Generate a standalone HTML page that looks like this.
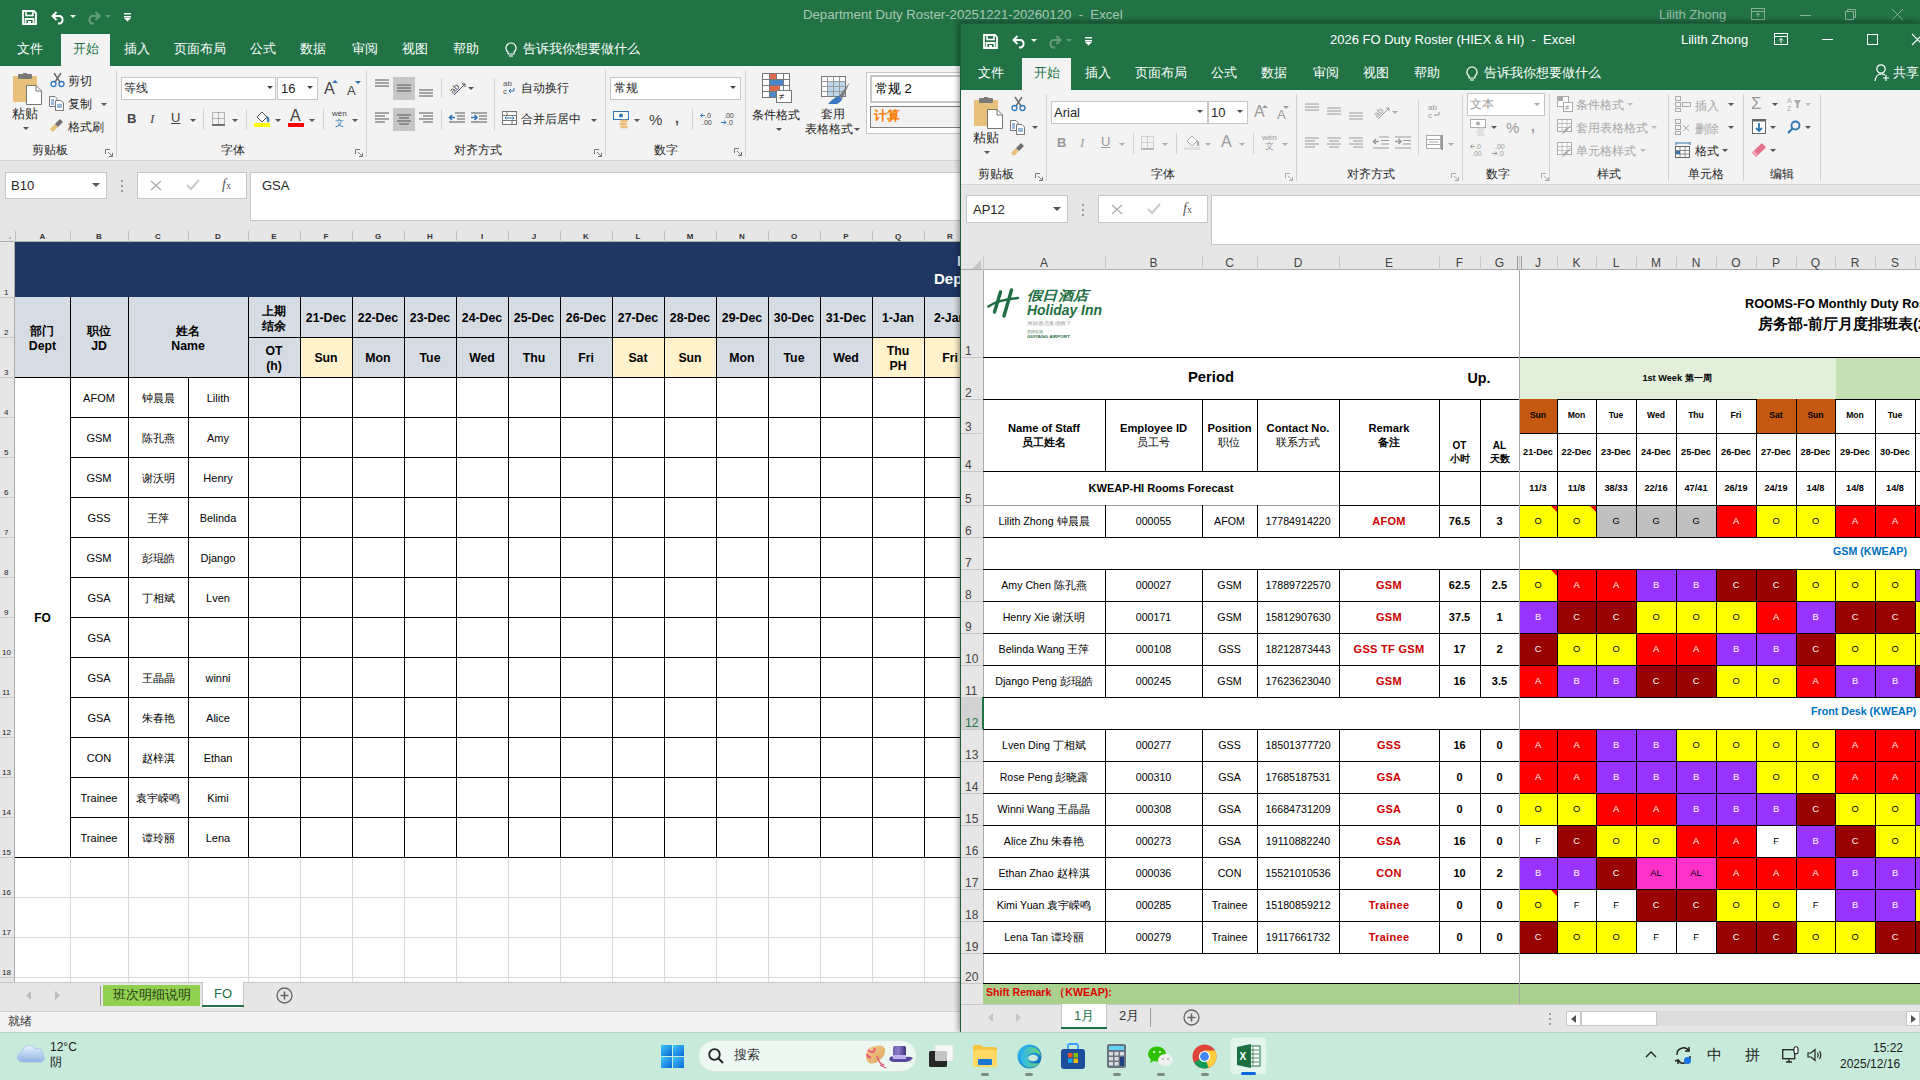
<!DOCTYPE html><html><head><meta charset="utf-8"><style>
*{box-sizing:border-box}
html,body{margin:0;padding:0}
body{width:1920px;height:1080px;overflow:hidden;position:relative;font-family:"Liberation Sans",sans-serif;background:#217346;color:#000}
.a{position:absolute}
.t{position:absolute;white-space:nowrap;line-height:1}
.c{position:absolute;display:flex;align-items:center;justify-content:center;text-align:center;white-space:nowrap;line-height:1.15;overflow:visible}
svg{position:absolute;overflow:visible}
</style></head><body><div class="a" style="left:0;top:0;width:1920px;height:34px;background:#217346"></div><svg style="left:22px;top:10px;" width="15" height="15" viewBox="0 0 15 15"><path d="M1 1 H12 L14 3 V14 H1 Z" fill="none" stroke="#fff" stroke-width="1.8"/><rect x="4" y="1" width="7" height="4.5" fill="none" stroke="#fff" stroke-width="1.6"/><path d="M3.5 14 V9 H11.5 V14" fill="none" stroke="#fff" stroke-width="1.8"/><rect x="6" y="11" width="3" height="3" fill="#fff"/></svg><svg style="left:51px;top:10px;" width="15" height="14" viewBox="0 0 15 14"><path d="M2.5 6 H9 A4 4 0 0 1 9 13.5 H7" fill="none" stroke="#fff" stroke-width="1.9"/><path d="M5.5 2 L1.5 6 L5.5 10" fill="none" stroke="#fff" stroke-width="1.9"/></svg><svg style="left:70px;top:15px;" width="6" height="4" viewBox="0 0 6 4"><path d="M0 0 L6 0 L3 3 Z" fill="#fff"/></svg><svg style="left:86px;top:10px;" width="15" height="14" viewBox="0 0 15 14"><g opacity="0.3"><path d="M12.5 6 H6 A4 4 0 0 0 6 13.5 H8" fill="none" stroke="#fff" stroke-width="1.9"/><path d="M9.5 2 L13.5 6 L9.5 10" fill="none" stroke="#fff" stroke-width="1.9"/></g></svg><svg style="left:105px;top:15px;" width="6" height="4" viewBox="0 0 6 4"><path d="M0 0 L6 0 L3 3 Z" fill="rgba(255,255,255,.3)"/></svg><svg style="left:124px;top:13px;" width="7" height="9" viewBox="0 0 7 9"><rect x="0" y="0" width="7" height="1.5" fill="#fff"/><rect x="0" y="3" width="7" height="1.5" fill="#fff"/><path d="M0 5 L7 5 L3.5 8.5 Z" fill="#fff"/></svg><div class="t" style="left:803px;top:8px;font-size:13.2px;color:rgba(255,255,255,.62)">Department Duty Roster-20251221-20260120&nbsp;&nbsp;-&nbsp;&nbsp;Excel</div><div class="t" style="left:1659px;top:8px;font-size:13px;color:rgba(255,255,255,.55)">Lilith Zhong</div><svg style="left:1751px;top:8px;" width="14" height="12" viewBox="0 0 14 12"><g opacity=".45"><rect x="0.5" y="0.5" width="13" height="11" fill="none" stroke="#fff"/><path d="M0.5 3.5 H13.5 M7 9 V5 M5 7 L7 5 L9 7" stroke="#fff" fill="none"/></g></svg><div class="a" style="left:1800px;top:15px;width:11px;height:1px;background:rgba(255,255,255,.45)"></div><svg style="left:1845px;top:9px;" width="11" height="11" viewBox="0 0 11 11"><g opacity=".45"><rect x="0.5" y="2.5" width="8" height="8" fill="none" stroke="#fff"/><path d="M2.5 2.5 V0.5 H10.5 V8.5 H8.5" stroke="#fff" fill="none"/></g></svg><svg style="left:1892px;top:9px;" width="11" height="11" viewBox="0 0 11 11"><g opacity=".45"><path d="M0 0 L11 11 M11 0 L0 11" stroke="#fff"/></g></svg><div class="a" style="left:0;top:34px;width:1920px;height:32px;background:#217346"></div><div class="a" style="left:61px;top:34px;width:49px;height:32px;background:#f3f3f3"></div><div class="t" style="left:17px;top:42px;font-size:13px;color:#fff">文件</div><div class="t" style="left:73px;top:42px;font-size:13px;color:#217346">开始</div><div class="t" style="left:124px;top:42px;font-size:13px;color:#fff">插入</div><div class="t" style="left:174px;top:42px;font-size:13px;color:#fff">页面布局</div><div class="t" style="left:250px;top:42px;font-size:13px;color:#fff">公式</div><div class="t" style="left:300px;top:42px;font-size:13px;color:#fff">数据</div><div class="t" style="left:352px;top:42px;font-size:13px;color:#fff">审阅</div><div class="t" style="left:402px;top:42px;font-size:13px;color:#fff">视图</div><div class="t" style="left:453px;top:42px;font-size:13px;color:#fff">帮助</div><svg style="left:505px;top:42px;" width="12" height="16" viewBox="0 0 12 16"><path d="M6 1 A5 5 0 0 1 9 10 V12 H3 V10 A5 5 0 0 1 6 1 Z" fill="none" stroke="#fff" stroke-width="1.2"/><path d="M4 14 H8" stroke="#fff" stroke-width="1.2"/></svg><div class="t" style="left:523px;top:42px;font-size:13px;color:#fff">告诉我你想要做什么</div><div class="a" style="left:0px;top:66px;width:1920px;height:95px;background:#f3f3f3;border-bottom:1px solid #d5d5d5"></div><svg style="left:13px;top:73px;" width="30" height="32" viewBox="0 0 30 32"><rect x="0" y="3" width="24" height="26" rx="1" fill="#e8c07a"/><rect x="5" y="1" width="14" height="5" rx="1" fill="#7a7a7a"/><rect x="10" y="0" width="4" height="3" fill="#7a7a7a"/><path d="M13.5 12.5 H23 L28.5 18 V31.5 H13.5 Z" fill="#fff" stroke="#777"/><path d="M23 12.5 V18 H28.5" fill="none" stroke="#777"/></svg><div class="t" style="left:12px;top:107px;font-size:13px;color:#262626">粘贴</div><svg style="left:23px;top:127px;" width="6" height="4" viewBox="0 0 6 4"><path d="M0 0 L6 0 L3 3 Z" fill="#555"/></svg><svg style="left:50px;top:72px;" width="15" height="15" viewBox="0 0 15 15"><path d="M4 1 L10 10 M11 1 L5 10" stroke="#666" stroke-width="1.4"/><circle cx="3.5" cy="12" r="2.5" fill="none" stroke="#2e75b6" stroke-width="1.3"/><circle cx="11.5" cy="12" r="2.5" fill="none" stroke="#2e75b6" stroke-width="1.3"/></svg><div class="t" style="left:68px;top:75px;font-size:12px;color:#262626">剪切</div><svg style="left:49px;top:96px;" width="16" height="15" viewBox="0 0 16 15"><path d="M0.5 0.5 H6 L8 2.5 V10.5 H0.5 Z" fill="#fff" stroke="#777"/><path d="M6.5 4.5 H12 L14.5 7 V14.5 H6.5 Z" fill="#fff" stroke="#777"/><path d="M2 4 H5 M2 6 H5 M2 8 H5" stroke="#2e75b6"/><path d="M8 9 H13 M8 11 H13" stroke="#2e75b6"/></svg><div class="t" style="left:68px;top:98px;font-size:12px;color:#262626">复制</div><svg style="left:101px;top:103px;" width="6" height="4" viewBox="0 0 6 4"><path d="M0 0 L6 0 L3 3 Z" fill="#555"/></svg><svg style="left:49px;top:119px;" width="17" height="14" viewBox="0 0 17 14"><path d="M1 10 L6 5 L9 8 L4 13 Z" fill="#e8c07a"/><path d="M6 5 L11 0 L14 3 L9 8 Z" fill="#707070"/></svg><div class="t" style="left:68px;top:121px;font-size:12px;color:#262626">格式刷</div><div class="c" style="left:28px;top:144px;width:44px;height:14px;font-size:12px;color:#262626"><span>剪贴板</span></div><svg style="left:105px;top:149px;" width="8" height="8" viewBox="0 0 8 8"><path d="M0.5 0.5 H5 M0.5 0.5 V5" stroke="#777" fill="none"/><path d="M3 3 L7.5 7.5 M7.5 4 V7.5 H4" stroke="#777" fill="none"/></svg><div class="a" style="left:116px;top:70px;width:1px;height:87px;background:#d2d2d2"></div><div class="a" style="left:121px;top:77px;width:155px;height:23px;background:#fff;border:1px solid #c6c6c6"></div><div class="t" style="left:124px;top:82px;font-size:12px;color:#262626">等线</div><svg style="left:267px;top:86px;" width="6" height="4" viewBox="0 0 6 4"><path d="M0 0 L6 0 L3 3 Z" fill="#444"/></svg><div class="a" style="left:277px;top:77px;width:41px;height:23px;background:#fff;border:1px solid #c6c6c6"></div><div class="t" style="left:281px;top:82px;font-size:13px;color:#262626">16</div><svg style="left:307px;top:86px;" width="6" height="4" viewBox="0 0 6 4"><path d="M0 0 L6 0 L3 3 Z" fill="#444"/></svg><div class="t" style="left:324px;top:81px;font-size:16px;color:#444">A</div><svg style="left:332px;top:80px;" width="6" height="4" viewBox="0 0 6 4"><path d="M0 3 L3 0 L6 3 Z" fill="#2e75b6"/></svg><div class="t" style="left:347px;top:84px;font-size:13px;color:#444">A</div><svg style="left:355px;top:81px;" width="6" height="4" viewBox="0 0 6 4"><path d="M0 0 L6 0 L3 3 Z" fill="#2e75b6"/></svg><div class="a" style="left:366px;top:70px;width:1px;height:87px;background:#d2d2d2"></div><div class="t" style="left:127px;top:112px;font-size:13px;font-weight:bold;color:#444">B</div><div class="t" style="left:150px;top:112px;font-size:13px;font-style:italic;font-family:'Liberation Serif';color:#444">I</div><div class="t" style="left:171px;top:111px;font-size:13px;color:#444;text-decoration:underline">U</div><svg style="left:190px;top:119px;" width="6" height="4" viewBox="0 0 6 4"><path d="M0 0 L6 0 L3 3 Z" fill="#555"/></svg><div class="a" style="left:203px;top:109px;width:1px;height:21px;background:#d2d2d2"></div><svg style="left:212px;top:112px;" width="14" height="14" viewBox="0 0 14 14"><g stroke="#777" stroke-dasharray="1 1"><rect x="0.5" y="0.5" width="12" height="12" fill="none"/><path d="M6.5 0.5 V12.5 M0.5 6.5 H12.5"/></g><path d="M0 13 H13" stroke="#555" stroke-width="1.5"/></svg><svg style="left:232px;top:119px;" width="6" height="4" viewBox="0 0 6 4"><path d="M0 0 L6 0 L3 3 Z" fill="#555"/></svg><div class="a" style="left:246px;top:109px;width:1px;height:21px;background:#d2d2d2"></div><svg style="left:254px;top:110px;" width="17" height="17" viewBox="0 0 17 17"><path d="M3 7 L8 2 L13 7 L8 12 Z" fill="#fff" stroke="#555"/><path d="M13 7 Q15 9 14 12" stroke="#2e75b6" stroke-width="2" fill="none"/><rect x="0" y="13" width="16" height="4" fill="#ffff00"/></svg><svg style="left:275px;top:119px;" width="6" height="4" viewBox="0 0 6 4"><path d="M0 0 L6 0 L3 3 Z" fill="#555"/></svg><div class="t" style="left:290px;top:108px;font-size:16px;color:#444">A</div><div class="a" style="left:288px;top:123px;width:16px;height:4px;background:#ff0000"></div><svg style="left:309px;top:119px;" width="6" height="4" viewBox="0 0 6 4"><path d="M0 0 L6 0 L3 3 Z" fill="#555"/></svg><div class="a" style="left:323px;top:109px;width:1px;height:21px;background:#d2d2d2"></div><div class="t" style="left:332px;top:110px;font-size:8px;color:#444">wén</div><div class="t" style="left:335px;top:119px;font-size:9px;color:#2e75b6">文</div><svg style="left:352px;top:119px;" width="6" height="4" viewBox="0 0 6 4"><path d="M0 0 L6 0 L3 3 Z" fill="#555"/></svg><div class="c" style="left:206px;top:144px;width:54px;height:14px;font-size:12px;color:#262626"><span>字体</span></div><svg style="left:355px;top:149px;" width="8" height="8" viewBox="0 0 8 8"><path d="M0.5 0.5 H5 M0.5 0.5 V5" stroke="#777" fill="none"/><path d="M3 3 L7.5 7.5 M7.5 4 V7.5 H4" stroke="#777" fill="none"/></svg><svg style="left:375px;top:79px;" width="14" height="11" viewBox="0 0 14 11"><path d="M0 1 H14 M0 4 H14 M0 7 H14" stroke="#555" stroke-width="1"/></svg><div class="a" style="left:393px;top:77px;width:22px;height:23px;background:#c5c5c5"></div><svg style="left:397px;top:84px;" width="14" height="11" viewBox="0 0 14 11"><path d="M0 1 H14 M0 4 H14 M0 7 H14" stroke="#555" stroke-width="1"/></svg><svg style="left:419px;top:89px;" width="14" height="11" viewBox="0 0 14 11"><path d="M0 1 H14 M0 4 H14 M0 7 H14" stroke="#555" stroke-width="1"/></svg><div class="a" style="left:441px;top:78px;width:1px;height:20px;background:#d2d2d2"></div><svg style="left:449px;top:80px;" width="18" height="16" viewBox="0 0 18 16"><text x="0" y="11" font-size="9" fill="#555" transform="rotate(-45 6 8)" font-family="Liberation Sans">ab</text><path d="M5 15 L16 4 M13 4 H16 V7" stroke="#555" fill="none"/></svg><svg style="left:468px;top:87px;" width="6" height="4" viewBox="0 0 6 4"><path d="M0 0 L6 0 L3 3 Z" fill="#555"/></svg><svg style="left:375px;top:112px;" width="14" height="11" viewBox="0 0 14 11"><path d="M0 1 H14 M0 4 H10 M0 7 H14 M0 10 H10" stroke="#555" stroke-width="1"/></svg><div class="a" style="left:393px;top:108px;width:22px;height:23px;background:#c5c5c5"></div><svg style="left:397px;top:114px;" width="14" height="11" viewBox="0 0 14 11"><path d="M0 1 H14 M2 4 H12 M0 7 H14 M2 10 H12" stroke="#555" stroke-width="1"/></svg><svg style="left:419px;top:112px;" width="14" height="11" viewBox="0 0 14 11"><path d="M0 1 H14 M4 4 H14 M0 7 H14 M4 10 H14" stroke="#555" stroke-width="1"/></svg><div class="a" style="left:441px;top:109px;width:1px;height:21px;background:#d2d2d2"></div><svg style="left:449px;top:112px;" width="17" height="12" viewBox="0 0 17 12"><path d="M6 1 H16 M8 4 H16 M8 7 H16 M0 10 H16" stroke="#555"/><path d="M0 5.5 H6 M3 3 L0.5 5.5 L3 8" stroke="#2e75b6" stroke-width="1.6" fill="none"/></svg><svg style="left:471px;top:112px;" width="17" height="12" viewBox="0 0 17 12"><path d="M0 1 H16 M8 4 H16 M8 7 H16 M0 10 H16" stroke="#555"/><path d="M0 5.5 H6 M3.5 3 L6 5.5 L3.5 8" stroke="#2e75b6" stroke-width="1.6" fill="none"/></svg><div class="a" style="left:494px;top:78px;width:1px;height:53px;background:#d2d2d2"></div><svg style="left:503px;top:79px;" width="13" height="16" viewBox="0 0 13 16"><text x="0" y="7" font-size="8" fill="#555" font-family="Liberation Sans">ab</text><text x="0" y="15" font-size="8" fill="#555" font-family="Liberation Sans">c</text><path d="M6 12 H11 V9 M6 12 L8 10 M6 12 L8 14" stroke="#2e75b6" fill="none"/></svg><div class="t" style="left:521px;top:82px;font-size:12px;color:#262626">自动换行</div><svg style="left:502px;top:111px;" width="15" height="14" viewBox="0 0 15 14"><rect x="0.5" y="0.5" width="14" height="13" fill="#fff" stroke="#777"/><path d="M0.5 4.5 H14.5 M0.5 9.5 H14.5 M5 0.5 V4.5 M10 9.5 V13.5" stroke="#777"/><path d="M3 7 H12 M4.5 5.5 L3 7 L4.5 8.5 M10.5 5.5 L12 7 L10.5 8.5" stroke="#2e75b6" fill="none"/></svg><div class="t" style="left:521px;top:113px;font-size:12px;color:#262626">合并后居中</div><svg style="left:591px;top:119px;" width="6" height="4" viewBox="0 0 6 4"><path d="M0 0 L6 0 L3 3 Z" fill="#555"/></svg><div class="c" style="left:450px;top:144px;width:56px;height:14px;font-size:12px;color:#262626"><span>对齐方式</span></div><svg style="left:594px;top:149px;" width="8" height="8" viewBox="0 0 8 8"><path d="M0.5 0.5 H5 M0.5 0.5 V5" stroke="#777" fill="none"/><path d="M3 3 L7.5 7.5 M7.5 4 V7.5 H4" stroke="#777" fill="none"/></svg><div class="a" style="left:605px;top:70px;width:1px;height:87px;background:#d2d2d2"></div><div class="a" style="left:610px;top:77px;width:131px;height:23px;background:#fff;border:1px solid #c6c6c6"></div><div class="t" style="left:614px;top:82px;font-size:12px;color:#262626">常规</div><svg style="left:730px;top:86px;" width="6" height="4" viewBox="0 0 6 4"><path d="M0 0 L6 0 L3 3 Z" fill="#444"/></svg><svg style="left:613px;top:111px;" width="17" height="17" viewBox="0 0 17 17"><rect x="0.5" y="0.5" width="15" height="8" fill="#fff" stroke="#2e75b6"/><circle cx="8" cy="4.5" r="2" fill="#2e75b6"/><ellipse cx="11" cy="10" rx="4" ry="1.6" fill="#e8c07a"/><ellipse cx="10" cy="13" rx="4" ry="1.6" fill="#e8c07a"/><ellipse cx="11" cy="16" rx="4" ry="1.4" fill="#e8c07a"/></svg><svg style="left:634px;top:119px;" width="6" height="4" viewBox="0 0 6 4"><path d="M0 0 L6 0 L3 3 Z" fill="#555"/></svg><div class="t" style="left:649px;top:112px;font-size:15px;color:#444">%</div><div class="t" style="left:675px;top:111px;font-size:14px;font-weight:bold;color:#444">,</div><div class="a" style="left:692px;top:109px;width:1px;height:21px;background:#d2d2d2"></div><svg style="left:700px;top:112px;" width="14" height="14" viewBox="0 0 14 14"><text x="5" y="6" font-size="7" fill="#444" font-family="Liberation Sans">.0</text><text x="2" y="13" font-size="7" fill="#444" font-family="Liberation Sans">.00</text><path d="M0.5 3.5 H5 M2.5 1.5 L0.5 3.5 L2.5 5.5" stroke="#2e75b6" fill="none"/></svg><svg style="left:721px;top:112px;" width="14" height="14" viewBox="0 0 14 14"><text x="3" y="6" font-size="7" fill="#444" font-family="Liberation Sans">.00</text><text x="6" y="13" font-size="7" fill="#444" font-family="Liberation Sans">.0</text><path d="M0 10.5 H5 M3 8.5 L5 10.5 L3 12.5" stroke="#2e75b6" fill="none"/></svg><div class="c" style="left:640px;top:144px;width:52px;height:14px;font-size:12px;color:#262626"><span>数字</span></div><svg style="left:734px;top:148px;" width="8" height="8" viewBox="0 0 8 8"><path d="M0.5 0.5 H5 M0.5 0.5 V5" stroke="#777" fill="none"/><path d="M3 3 L7.5 7.5 M7.5 4 V7.5 H4" stroke="#777" fill="none"/></svg><div class="a" style="left:745px;top:70px;width:1px;height:87px;background:#d2d2d2"></div><svg style="left:762px;top:73px;" width="30" height="30" viewBox="0 0 30 30"><g stroke="#777" fill="#fff"><rect x="0.5" y="0.5" width="27" height="24"/></g><path d="M0.5 6.5 H27.5 M0.5 12.5 H27.5 M0.5 18.5 H27.5 M7.5 0.5 V24.5 M14.5 0.5 V24.5 M21.5 0.5 V24.5" stroke="#777"/><rect x="8" y="1" width="6" height="5" fill="#e0684b"/><rect x="8" y="7" width="13" height="5" fill="#4a86c8"/><rect x="8" y="13" width="10" height="5" fill="#e0684b"/><rect x="8" y="19" width="6" height="5" fill="#4a86c8"/><rect x="14.5" y="17.5" width="15" height="12" fill="#fff" stroke="#777"/><text x="17" y="27" font-size="10" fill="#333" font-family="Liberation Sans">≠</text></svg><div class="t" style="left:752px;top:109px;font-size:12px;color:#262626">条件格式</div><svg style="left:776px;top:128px;" width="6" height="4" viewBox="0 0 6 4"><path d="M0 0 L6 0 L3 3 Z" fill="#555"/></svg><svg style="left:821px;top:76px;" width="30" height="28" viewBox="0 0 30 28"><rect x="0.5" y="0.5" width="24" height="20" fill="#fff" stroke="#777"/><rect x="6" y="6" width="18" height="14" fill="#bdd7ee"/><path d="M0.5 5.5 H24.5 M0.5 10.5 H24.5 M0.5 15.5 H24.5 M6.5 0.5 V20.5 M12.5 0.5 V20.5 M18.5 0.5 V20.5" stroke="#999"/><path d="M29 6 L18 20 L21 23 Z" fill="#7a7a7a"/><path d="M18 20 Q12 22 7 28 H16 Q21 25 21 23 Z" fill="#3a78c3"/></svg><div class="t" style="left:821px;top:108px;font-size:12px;color:#262626">套用</div><div class="t" style="left:805px;top:123px;font-size:12px;color:#262626">表格格式</div><svg style="left:854px;top:128px;" width="6" height="4" viewBox="0 0 6 4"><path d="M0 0 L6 0 L3 3 Z" fill="#555"/></svg><div class="a" style="left:866px;top:72px;width:100px;height:62px;background:#fff;border:1px solid #c6c6c6"></div><div class="a" style="left:870px;top:75px;width:96px;height:28px;background:#fff;border:2px solid #c6c6c6"></div><div class="t" style="left:875px;top:82px;font-size:13px;color:#000">常规 2</div><div class="a" style="left:870px;top:106px;width:96px;height:22px;background:#f2f2f2;border:1px solid #7f7f7f"></div><div class="t" style="left:874px;top:109px;font-size:13px;font-weight:bold;color:#fa7d00">计算</div><div class="a" style="left:0px;top:161px;width:960px;height:70px;background:#e6e6e6"></div><div class="a" style="left:5px;top:172px;width:102px;height:27px;background:#fff;border:1px solid #c6c6c6"></div><div class="t" style="left:11px;top:179px;font-size:13px;color:#262626">B10</div><svg style="left:92px;top:183px;" width="8" height="5" viewBox="0 0 8 5"><path d="M0 0 L8 0 L4 4 Z" fill="#555"/></svg><div class="a" style="left:121px;top:180px;width:2px;height:2px;background:#9a9a9a"></div><div class="a" style="left:121px;top:185px;width:2px;height:2px;background:#9a9a9a"></div><div class="a" style="left:121px;top:190px;width:2px;height:2px;background:#9a9a9a"></div><div class="a" style="left:137px;top:172px;width:110px;height:27px;background:#fff;border:1px solid #c6c6c6"></div><svg style="left:150px;top:180px;" width="12" height="11" viewBox="0 0 12 11"><path d="M1 1 L11 10 M11 1 L1 10" stroke="#b0b0b0" stroke-width="1.4"/></svg><svg style="left:186px;top:179px;" width="14" height="12" viewBox="0 0 14 12"><path d="M1 6 L5 10 L13 1" stroke="#c8c8c8" stroke-width="2" fill="none"/></svg><div class="t" style="left:222px;top:178px;font-size:14px;font-family:'Liberation Serif';color:#555"><i>f</i><span style='font-size:10px'>x</span></div><div class="a" style="left:250px;top:172px;width:710px;height:49px;background:#fff;border:1px solid #c6c6c6;border-right:none"></div><div class="t" style="left:262px;top:179px;font-size:13px;color:#262626">GSA</div><div class="a" style="left:0px;top:231px;width:960px;height:11px;background:#e6e6e6;border-bottom:1px solid #ababab"></div><svg style="left:8px;top:236px;" width="3" height="3" viewBox="0 0 3 3"><path d="M3 0 V3 H0 Z" fill="#b4b4b4"/></svg><div class="a" style="left:15px;top:231px;width:1px;height:11px;background:#c0c0c0"></div><div class="c" style="left:15px;top:232px;width:55px;height:10px;font-size:8px;font-weight:bold;color:#333;line-height:1"><span>A</span></div><div class="a" style="left:70px;top:231px;width:1px;height:11px;background:#c0c0c0"></div><div class="c" style="left:70px;top:232px;width:58px;height:10px;font-size:8px;font-weight:bold;color:#333;line-height:1"><span>B</span></div><div class="a" style="left:128px;top:231px;width:1px;height:11px;background:#c0c0c0"></div><div class="c" style="left:128px;top:232px;width:60px;height:10px;font-size:8px;font-weight:bold;color:#333;line-height:1"><span>C</span></div><div class="a" style="left:188px;top:231px;width:1px;height:11px;background:#c0c0c0"></div><div class="c" style="left:188px;top:232px;width:60px;height:10px;font-size:8px;font-weight:bold;color:#333;line-height:1"><span>D</span></div><div class="a" style="left:248px;top:231px;width:1px;height:11px;background:#c0c0c0"></div><div class="c" style="left:248px;top:232px;width:52px;height:10px;font-size:8px;font-weight:bold;color:#333;line-height:1"><span>E</span></div><div class="a" style="left:300px;top:231px;width:1px;height:11px;background:#c0c0c0"></div><div class="c" style="left:300px;top:232px;width:52px;height:10px;font-size:8px;font-weight:bold;color:#333;line-height:1"><span>F</span></div><div class="a" style="left:352px;top:231px;width:1px;height:11px;background:#c0c0c0"></div><div class="c" style="left:352px;top:232px;width:52px;height:10px;font-size:8px;font-weight:bold;color:#333;line-height:1"><span>G</span></div><div class="a" style="left:404px;top:231px;width:1px;height:11px;background:#c0c0c0"></div><div class="c" style="left:404px;top:232px;width:52px;height:10px;font-size:8px;font-weight:bold;color:#333;line-height:1"><span>H</span></div><div class="a" style="left:456px;top:231px;width:1px;height:11px;background:#c0c0c0"></div><div class="c" style="left:456px;top:232px;width:52px;height:10px;font-size:8px;font-weight:bold;color:#333;line-height:1"><span>I</span></div><div class="a" style="left:508px;top:231px;width:1px;height:11px;background:#c0c0c0"></div><div class="c" style="left:508px;top:232px;width:52px;height:10px;font-size:8px;font-weight:bold;color:#333;line-height:1"><span>J</span></div><div class="a" style="left:560px;top:231px;width:1px;height:11px;background:#c0c0c0"></div><div class="c" style="left:560px;top:232px;width:52px;height:10px;font-size:8px;font-weight:bold;color:#333;line-height:1"><span>K</span></div><div class="a" style="left:612px;top:231px;width:1px;height:11px;background:#c0c0c0"></div><div class="c" style="left:612px;top:232px;width:52px;height:10px;font-size:8px;font-weight:bold;color:#333;line-height:1"><span>L</span></div><div class="a" style="left:664px;top:231px;width:1px;height:11px;background:#c0c0c0"></div><div class="c" style="left:664px;top:232px;width:52px;height:10px;font-size:8px;font-weight:bold;color:#333;line-height:1"><span>M</span></div><div class="a" style="left:716px;top:231px;width:1px;height:11px;background:#c0c0c0"></div><div class="c" style="left:716px;top:232px;width:52px;height:10px;font-size:8px;font-weight:bold;color:#333;line-height:1"><span>N</span></div><div class="a" style="left:768px;top:231px;width:1px;height:11px;background:#c0c0c0"></div><div class="c" style="left:768px;top:232px;width:52px;height:10px;font-size:8px;font-weight:bold;color:#333;line-height:1"><span>O</span></div><div class="a" style="left:820px;top:231px;width:1px;height:11px;background:#c0c0c0"></div><div class="c" style="left:820px;top:232px;width:52px;height:10px;font-size:8px;font-weight:bold;color:#333;line-height:1"><span>P</span></div><div class="a" style="left:872px;top:231px;width:1px;height:11px;background:#c0c0c0"></div><div class="c" style="left:872px;top:232px;width:52px;height:10px;font-size:8px;font-weight:bold;color:#333;line-height:1"><span>Q</span></div><div class="a" style="left:924px;top:231px;width:1px;height:11px;background:#c0c0c0"></div><div class="c" style="left:924px;top:232px;width:52px;height:10px;font-size:8px;font-weight:bold;color:#333;line-height:1"><span>R</span></div><div class="a" style="left:15px;top:242px;width:945px;height:740px;background:#fff"></div><div class="a" style="left:0px;top:242px;width:15px;height:740px;background:#e6e6e6;border-right:1px solid #ababab"></div><div class="a" style="left:0px;top:297px;width:14px;height:1px;background:#c8c8c8"></div><div class="t" style="left:4px;top:289px;font-size:8px;color:#222">1</div><div class="a" style="left:0px;top:337px;width:14px;height:1px;background:#c8c8c8"></div><div class="t" style="left:4px;top:329px;font-size:8px;color:#222">2</div><div class="a" style="left:0px;top:377px;width:14px;height:1px;background:#c8c8c8"></div><div class="t" style="left:4px;top:369px;font-size:8px;color:#222">3</div><div class="a" style="left:0px;top:417px;width:14px;height:1px;background:#c8c8c8"></div><div class="t" style="left:4px;top:409px;font-size:8px;color:#222">4</div><div class="a" style="left:0px;top:457px;width:14px;height:1px;background:#c8c8c8"></div><div class="t" style="left:4px;top:449px;font-size:8px;color:#222">5</div><div class="a" style="left:0px;top:497px;width:14px;height:1px;background:#c8c8c8"></div><div class="t" style="left:4px;top:489px;font-size:8px;color:#222">6</div><div class="a" style="left:0px;top:537px;width:14px;height:1px;background:#c8c8c8"></div><div class="t" style="left:4px;top:529px;font-size:8px;color:#222">7</div><div class="a" style="left:0px;top:577px;width:14px;height:1px;background:#c8c8c8"></div><div class="t" style="left:4px;top:569px;font-size:8px;color:#222">8</div><div class="a" style="left:0px;top:617px;width:14px;height:1px;background:#c8c8c8"></div><div class="t" style="left:4px;top:609px;font-size:8px;color:#222">9</div><div class="a" style="left:0px;top:657px;width:14px;height:1px;background:#c8c8c8"></div><div class="t" style="left:2px;top:649px;font-size:8px;color:#222">10</div><div class="a" style="left:0px;top:697px;width:14px;height:1px;background:#c8c8c8"></div><div class="t" style="left:2px;top:689px;font-size:8px;color:#222">11</div><div class="a" style="left:0px;top:737px;width:14px;height:1px;background:#c8c8c8"></div><div class="t" style="left:2px;top:729px;font-size:8px;color:#222">12</div><div class="a" style="left:0px;top:777px;width:14px;height:1px;background:#c8c8c8"></div><div class="t" style="left:2px;top:769px;font-size:8px;color:#222">13</div><div class="a" style="left:0px;top:817px;width:14px;height:1px;background:#c8c8c8"></div><div class="t" style="left:2px;top:809px;font-size:8px;color:#222">14</div><div class="a" style="left:0px;top:857px;width:14px;height:1px;background:#c8c8c8"></div><div class="t" style="left:2px;top:849px;font-size:8px;color:#222">15</div><div class="a" style="left:0px;top:897px;width:14px;height:1px;background:#c8c8c8"></div><div class="t" style="left:2px;top:889px;font-size:8px;color:#222">16</div><div class="a" style="left:0px;top:937px;width:14px;height:1px;background:#c8c8c8"></div><div class="t" style="left:2px;top:929px;font-size:8px;color:#222">17</div><div class="a" style="left:0px;top:977px;width:14px;height:1px;background:#c8c8c8"></div><div class="t" style="left:2px;top:969px;font-size:8px;color:#222">18</div><div class="a" style="left:70px;top:857px;width:1px;height:125px;background:#d9d9d9"></div><div class="a" style="left:128px;top:857px;width:1px;height:125px;background:#d9d9d9"></div><div class="a" style="left:188px;top:857px;width:1px;height:125px;background:#d9d9d9"></div><div class="a" style="left:248px;top:857px;width:1px;height:125px;background:#d9d9d9"></div><div class="a" style="left:300px;top:857px;width:1px;height:125px;background:#d9d9d9"></div><div class="a" style="left:352px;top:857px;width:1px;height:125px;background:#d9d9d9"></div><div class="a" style="left:404px;top:857px;width:1px;height:125px;background:#d9d9d9"></div><div class="a" style="left:456px;top:857px;width:1px;height:125px;background:#d9d9d9"></div><div class="a" style="left:508px;top:857px;width:1px;height:125px;background:#d9d9d9"></div><div class="a" style="left:560px;top:857px;width:1px;height:125px;background:#d9d9d9"></div><div class="a" style="left:612px;top:857px;width:1px;height:125px;background:#d9d9d9"></div><div class="a" style="left:664px;top:857px;width:1px;height:125px;background:#d9d9d9"></div><div class="a" style="left:716px;top:857px;width:1px;height:125px;background:#d9d9d9"></div><div class="a" style="left:768px;top:857px;width:1px;height:125px;background:#d9d9d9"></div><div class="a" style="left:820px;top:857px;width:1px;height:125px;background:#d9d9d9"></div><div class="a" style="left:872px;top:857px;width:1px;height:125px;background:#d9d9d9"></div><div class="a" style="left:924px;top:857px;width:1px;height:125px;background:#d9d9d9"></div><div class="a" style="left:15px;top:897px;width:945px;height:1px;background:#d9d9d9"></div><div class="a" style="left:15px;top:937px;width:945px;height:1px;background:#d9d9d9"></div><div class="a" style="left:15px;top:977px;width:945px;height:1px;background:#d9d9d9"></div><div class="a" style="left:15px;top:242px;width:945px;height:55px;background:#203764"></div><div class="t" style="left:957px;top:253px;font-size:15px;font-weight:bold;color:#fff">H</div><div class="t" style="left:934px;top:271px;font-size:15px;font-weight:bold;color:#fff">Dep</div><div class="a" style="left:15px;top:297px;width:945px;height:80px;background:#d6dce4"></div><div class="a" style="left:300px;top:337px;width:52px;height:40px;background:#fff2cc"></div><div class="c" style="left:300px;top:297px;width:52px;height:40px;font-size:12.3px;font-weight:bold;color:#000;padding-top:3px"><span>21-Dec</span></div><div class="c" style="left:300px;top:337px;width:52px;height:40px;font-size:12.3px;font-weight:bold;color:#000;padding-top:3px"><span>Sun</span></div><div class="c" style="left:352px;top:297px;width:52px;height:40px;font-size:12.3px;font-weight:bold;color:#000;padding-top:3px"><span>22-Dec</span></div><div class="c" style="left:352px;top:337px;width:52px;height:40px;font-size:12.3px;font-weight:bold;color:#000;padding-top:3px"><span>Mon</span></div><div class="c" style="left:404px;top:297px;width:52px;height:40px;font-size:12.3px;font-weight:bold;color:#000;padding-top:3px"><span>23-Dec</span></div><div class="c" style="left:404px;top:337px;width:52px;height:40px;font-size:12.3px;font-weight:bold;color:#000;padding-top:3px"><span>Tue</span></div><div class="c" style="left:456px;top:297px;width:52px;height:40px;font-size:12.3px;font-weight:bold;color:#000;padding-top:3px"><span>24-Dec</span></div><div class="c" style="left:456px;top:337px;width:52px;height:40px;font-size:12.3px;font-weight:bold;color:#000;padding-top:3px"><span>Wed</span></div><div class="c" style="left:508px;top:297px;width:52px;height:40px;font-size:12.3px;font-weight:bold;color:#000;padding-top:3px"><span>25-Dec</span></div><div class="c" style="left:508px;top:337px;width:52px;height:40px;font-size:12.3px;font-weight:bold;color:#000;padding-top:3px"><span>Thu</span></div><div class="c" style="left:560px;top:297px;width:52px;height:40px;font-size:12.3px;font-weight:bold;color:#000;padding-top:3px"><span>26-Dec</span></div><div class="c" style="left:560px;top:337px;width:52px;height:40px;font-size:12.3px;font-weight:bold;color:#000;padding-top:3px"><span>Fri</span></div><div class="a" style="left:612px;top:337px;width:52px;height:40px;background:#fff2cc"></div><div class="c" style="left:612px;top:297px;width:52px;height:40px;font-size:12.3px;font-weight:bold;color:#000;padding-top:3px"><span>27-Dec</span></div><div class="c" style="left:612px;top:337px;width:52px;height:40px;font-size:12.3px;font-weight:bold;color:#000;padding-top:3px"><span>Sat</span></div><div class="a" style="left:664px;top:337px;width:52px;height:40px;background:#fff2cc"></div><div class="c" style="left:664px;top:297px;width:52px;height:40px;font-size:12.3px;font-weight:bold;color:#000;padding-top:3px"><span>28-Dec</span></div><div class="c" style="left:664px;top:337px;width:52px;height:40px;font-size:12.3px;font-weight:bold;color:#000;padding-top:3px"><span>Sun</span></div><div class="c" style="left:716px;top:297px;width:52px;height:40px;font-size:12.3px;font-weight:bold;color:#000;padding-top:3px"><span>29-Dec</span></div><div class="c" style="left:716px;top:337px;width:52px;height:40px;font-size:12.3px;font-weight:bold;color:#000;padding-top:3px"><span>Mon</span></div><div class="c" style="left:768px;top:297px;width:52px;height:40px;font-size:12.3px;font-weight:bold;color:#000;padding-top:3px"><span>30-Dec</span></div><div class="c" style="left:768px;top:337px;width:52px;height:40px;font-size:12.3px;font-weight:bold;color:#000;padding-top:3px"><span>Tue</span></div><div class="c" style="left:820px;top:297px;width:52px;height:40px;font-size:12.3px;font-weight:bold;color:#000;padding-top:3px"><span>31-Dec</span></div><div class="c" style="left:820px;top:337px;width:52px;height:40px;font-size:12.3px;font-weight:bold;color:#000;padding-top:3px"><span>Wed</span></div><div class="a" style="left:872px;top:337px;width:52px;height:40px;background:#fff2cc"></div><div class="c" style="left:872px;top:297px;width:52px;height:40px;font-size:12.3px;font-weight:bold;color:#000;padding-top:3px"><span>1-Jan</span></div><div class="c" style="left:872px;top:337px;width:52px;height:40px;font-size:12.3px;font-weight:bold;color:#000;padding-top:3px"><span>Thu<br>PH</span></div><div class="a" style="left:924px;top:337px;width:52px;height:40px;background:#fff2cc"></div><div class="c" style="left:924px;top:297px;width:52px;height:40px;font-size:12.3px;font-weight:bold;color:#000;padding-top:3px"><span>2-Jan</span></div><div class="c" style="left:924px;top:337px;width:52px;height:40px;font-size:12.3px;font-weight:bold;color:#000;padding-top:3px"><span>Fri</span></div><div class="c" style="left:15px;top:297px;width:55px;height:80px;font-size:12.3px;font-weight:bold;color:#000;padding-top:3px"><span>部门<br>Dept</span></div><div class="c" style="left:70px;top:297px;width:58px;height:80px;font-size:12.3px;font-weight:bold;color:#000;padding-top:3px"><span>职位<br>JD</span></div><div class="c" style="left:128px;top:297px;width:120px;height:80px;font-size:12.3px;font-weight:bold;color:#000;padding-top:3px"><span>姓名<br>Name</span></div><div class="c" style="left:248px;top:297px;width:52px;height:40px;font-size:12.3px;font-weight:bold;color:#000;padding-top:3px"><span>上期<br>结余</span></div><div class="c" style="left:248px;top:337px;width:52px;height:40px;font-size:12.3px;font-weight:bold;color:#000;padding-top:3px"><span>OT<br>(h)</span></div><div class="a" style="left:70px;top:297px;width:1px;height:80px;background:#000"></div><div class="a" style="left:128px;top:297px;width:1px;height:80px;background:#000"></div><div class="a" style="left:248px;top:297px;width:1px;height:80px;background:#000"></div><div class="a" style="left:300px;top:297px;width:1px;height:80px;background:#000"></div><div class="a" style="left:352px;top:297px;width:1px;height:80px;background:#000"></div><div class="a" style="left:404px;top:297px;width:1px;height:80px;background:#000"></div><div class="a" style="left:456px;top:297px;width:1px;height:80px;background:#000"></div><div class="a" style="left:508px;top:297px;width:1px;height:80px;background:#000"></div><div class="a" style="left:560px;top:297px;width:1px;height:80px;background:#000"></div><div class="a" style="left:612px;top:297px;width:1px;height:80px;background:#000"></div><div class="a" style="left:664px;top:297px;width:1px;height:80px;background:#000"></div><div class="a" style="left:716px;top:297px;width:1px;height:80px;background:#000"></div><div class="a" style="left:768px;top:297px;width:1px;height:80px;background:#000"></div><div class="a" style="left:820px;top:297px;width:1px;height:80px;background:#000"></div><div class="a" style="left:872px;top:297px;width:1px;height:80px;background:#000"></div><div class="a" style="left:924px;top:297px;width:1px;height:80px;background:#000"></div><div class="a" style="left:248px;top:337px;width:712px;height:1px;background:#000"></div><div class="a" style="left:15px;top:377px;width:945px;height:1px;background:#000"></div><div class="c" style="left:70px;top:377px;width:58px;height:40px;font-size:11px;color:#000;padding-top:2px"><span>AFOM</span></div><div class="c" style="left:128px;top:377px;width:60px;height:40px;font-size:11px;color:#000;padding-top:2px"><span>钟晨晨</span></div><div class="c" style="left:188px;top:377px;width:60px;height:40px;font-size:11px;color:#000;padding-top:2px"><span>Lilith</span></div><div class="c" style="left:70px;top:417px;width:58px;height:40px;font-size:11px;color:#000;padding-top:2px"><span>GSM</span></div><div class="c" style="left:128px;top:417px;width:60px;height:40px;font-size:11px;color:#000;padding-top:2px"><span>陈孔燕</span></div><div class="c" style="left:188px;top:417px;width:60px;height:40px;font-size:11px;color:#000;padding-top:2px"><span>Amy</span></div><div class="c" style="left:70px;top:457px;width:58px;height:40px;font-size:11px;color:#000;padding-top:2px"><span>GSM</span></div><div class="c" style="left:128px;top:457px;width:60px;height:40px;font-size:11px;color:#000;padding-top:2px"><span>谢沃明</span></div><div class="c" style="left:188px;top:457px;width:60px;height:40px;font-size:11px;color:#000;padding-top:2px"><span>Henry</span></div><div class="c" style="left:70px;top:497px;width:58px;height:40px;font-size:11px;color:#000;padding-top:2px"><span>GSS</span></div><div class="c" style="left:128px;top:497px;width:60px;height:40px;font-size:11px;color:#000;padding-top:2px"><span>王萍</span></div><div class="c" style="left:188px;top:497px;width:60px;height:40px;font-size:11px;color:#000;padding-top:2px"><span>Belinda</span></div><div class="c" style="left:70px;top:537px;width:58px;height:40px;font-size:11px;color:#000;padding-top:2px"><span>GSM</span></div><div class="c" style="left:128px;top:537px;width:60px;height:40px;font-size:11px;color:#000;padding-top:2px"><span>彭琨皓</span></div><div class="c" style="left:188px;top:537px;width:60px;height:40px;font-size:11px;color:#000;padding-top:2px"><span>Django</span></div><div class="c" style="left:70px;top:577px;width:58px;height:40px;font-size:11px;color:#000;padding-top:2px"><span>GSA</span></div><div class="c" style="left:128px;top:577px;width:60px;height:40px;font-size:11px;color:#000;padding-top:2px"><span>丁相斌</span></div><div class="c" style="left:188px;top:577px;width:60px;height:40px;font-size:11px;color:#000;padding-top:2px"><span>Lven</span></div><div class="c" style="left:70px;top:617px;width:58px;height:40px;font-size:11px;color:#000;padding-top:2px"><span>GSA</span></div><div class="c" style="left:128px;top:617px;width:60px;height:40px;font-size:11px;color:#000;padding-top:2px"><span></span></div><div class="c" style="left:188px;top:617px;width:60px;height:40px;font-size:11px;color:#000;padding-top:2px"><span></span></div><div class="c" style="left:70px;top:657px;width:58px;height:40px;font-size:11px;color:#000;padding-top:2px"><span>GSA</span></div><div class="c" style="left:128px;top:657px;width:60px;height:40px;font-size:11px;color:#000;padding-top:2px"><span>王晶晶</span></div><div class="c" style="left:188px;top:657px;width:60px;height:40px;font-size:11px;color:#000;padding-top:2px"><span>winni</span></div><div class="c" style="left:70px;top:697px;width:58px;height:40px;font-size:11px;color:#000;padding-top:2px"><span>GSA</span></div><div class="c" style="left:128px;top:697px;width:60px;height:40px;font-size:11px;color:#000;padding-top:2px"><span>朱春艳</span></div><div class="c" style="left:188px;top:697px;width:60px;height:40px;font-size:11px;color:#000;padding-top:2px"><span>Alice</span></div><div class="c" style="left:70px;top:737px;width:58px;height:40px;font-size:11px;color:#000;padding-top:2px"><span>CON</span></div><div class="c" style="left:128px;top:737px;width:60px;height:40px;font-size:11px;color:#000;padding-top:2px"><span>赵梓淇</span></div><div class="c" style="left:188px;top:737px;width:60px;height:40px;font-size:11px;color:#000;padding-top:2px"><span>Ethan</span></div><div class="c" style="left:70px;top:777px;width:58px;height:40px;font-size:11px;color:#000;padding-top:2px"><span>Trainee</span></div><div class="c" style="left:128px;top:777px;width:60px;height:40px;font-size:11px;color:#000;padding-top:2px"><span>袁宇嵘鸣</span></div><div class="c" style="left:188px;top:777px;width:60px;height:40px;font-size:11px;color:#000;padding-top:2px"><span>Kimi</span></div><div class="c" style="left:70px;top:817px;width:58px;height:40px;font-size:11px;color:#000;padding-top:2px"><span>Trainee</span></div><div class="c" style="left:128px;top:817px;width:60px;height:40px;font-size:11px;color:#000;padding-top:2px"><span>谭玲丽</span></div><div class="c" style="left:188px;top:817px;width:60px;height:40px;font-size:11px;color:#000;padding-top:2px"><span>Lena</span></div><div class="c" style="left:15px;top:377px;width:55px;height:480px;font-size:12px;font-weight:bold;color:#000;padding-top:3px"><span>FO</span></div><div class="a" style="left:70px;top:377px;width:1px;height:481px;background:#000"></div><div class="a" style="left:128px;top:377px;width:1px;height:481px;background:#000"></div><div class="a" style="left:188px;top:377px;width:1px;height:481px;background:#000"></div><div class="a" style="left:248px;top:377px;width:1px;height:481px;background:#000"></div><div class="a" style="left:300px;top:377px;width:1px;height:481px;background:#000"></div><div class="a" style="left:352px;top:377px;width:1px;height:481px;background:#000"></div><div class="a" style="left:404px;top:377px;width:1px;height:481px;background:#000"></div><div class="a" style="left:456px;top:377px;width:1px;height:481px;background:#000"></div><div class="a" style="left:508px;top:377px;width:1px;height:481px;background:#000"></div><div class="a" style="left:560px;top:377px;width:1px;height:481px;background:#000"></div><div class="a" style="left:612px;top:377px;width:1px;height:481px;background:#000"></div><div class="a" style="left:664px;top:377px;width:1px;height:481px;background:#000"></div><div class="a" style="left:716px;top:377px;width:1px;height:481px;background:#000"></div><div class="a" style="left:768px;top:377px;width:1px;height:481px;background:#000"></div><div class="a" style="left:820px;top:377px;width:1px;height:481px;background:#000"></div><div class="a" style="left:872px;top:377px;width:1px;height:481px;background:#000"></div><div class="a" style="left:924px;top:377px;width:1px;height:481px;background:#000"></div><div class="a" style="left:70px;top:417px;width:890px;height:1px;background:#000"></div><div class="a" style="left:70px;top:457px;width:890px;height:1px;background:#000"></div><div class="a" style="left:70px;top:497px;width:890px;height:1px;background:#000"></div><div class="a" style="left:70px;top:537px;width:890px;height:1px;background:#000"></div><div class="a" style="left:70px;top:577px;width:890px;height:1px;background:#000"></div><div class="a" style="left:70px;top:617px;width:890px;height:1px;background:#000"></div><div class="a" style="left:70px;top:657px;width:890px;height:1px;background:#000"></div><div class="a" style="left:70px;top:697px;width:890px;height:1px;background:#000"></div><div class="a" style="left:70px;top:737px;width:890px;height:1px;background:#000"></div><div class="a" style="left:70px;top:777px;width:890px;height:1px;background:#000"></div><div class="a" style="left:70px;top:817px;width:890px;height:1px;background:#000"></div><div class="a" style="left:15px;top:857px;width:945px;height:1px;background:#000"></div><div class="a" style="left:0px;top:982px;width:960px;height:29px;background:#e6e6e6;border-top:1px solid #c6c6c6"></div><svg style="left:26px;top:991px;" width="6" height="9" viewBox="0 0 6 9"><path d="M5 0 L0 4.5 L5 9 Z" fill="#bdbdbd"/></svg><svg style="left:55px;top:991px;" width="6" height="9" viewBox="0 0 6 9"><path d="M0 0 L5 4.5 L0 9 Z" fill="#bdbdbd"/></svg><div class="a" style="left:100px;top:986px;width:1px;height:20px;background:#9b9b9b"></div><div class="a" style="left:103px;top:985px;width:97px;height:21px;background:#92d050"></div><div class="c" style="left:103px;top:985px;width:97px;height:21px;font-size:13px;color:#1e3a12"><span>班次明细说明</span></div><div class="a" style="left:202px;top:982px;width:42px;height:26px;background:#fff;border-left:1px solid #c6c6c6;border-right:1px solid #c6c6c6"></div><div class="a" style="left:202px;top:1005px;width:42px;height:2px;background:#217346"></div><div class="c" style="left:202px;top:984px;width:42px;height:21px;font-size:13px;color:#217346"><span>FO</span></div><svg style="left:276px;top:987px;" width="17" height="17" viewBox="0 0 17 17"><circle cx="8.5" cy="8.5" r="7.5" fill="none" stroke="#666" stroke-width="1.3"/><path d="M8.5 4.5 V12.5 M4.5 8.5 H12.5" stroke="#666" stroke-width="1.6"/></svg><div class="a" style="left:0px;top:1011px;width:960px;height:21px;background:#f3f3f3;border-top:1px solid #d0d0d0"></div><div class="t" style="left:8px;top:1015px;font-size:12px;color:#333">就绪</div><div class="a" style="left:960px;top:23px;width:960px;height:1009px;box-shadow:-1px -1px 5px 1px rgba(0,0,0,.35)"></div><div class="a" style="left:960px;top:23px;width:960px;height:1009px;background:#217346;border-left:1px solid #1b5e39;border-top:1px solid #1b5e39"></div><svg style="left:983px;top:34px;" width="15" height="15" viewBox="0 0 15 15"><path d="M1 1 H12 L14 3 V14 H1 Z" fill="none" stroke="#fff" stroke-width="1.8"/><rect x="4" y="1" width="7" height="4.5" fill="none" stroke="#fff" stroke-width="1.6"/><path d="M3.5 14 V9 H11.5 V14" fill="none" stroke="#fff" stroke-width="1.8"/><rect x="6" y="11" width="3" height="3" fill="#fff"/></svg><svg style="left:1012px;top:34px;" width="15" height="14" viewBox="0 0 15 14"><path d="M2.5 6 H9 A4 4 0 0 1 9 13.5 H7" fill="none" stroke="#fff" stroke-width="1.9"/><path d="M5.5 2 L1.5 6 L5.5 10" fill="none" stroke="#fff" stroke-width="1.9"/></svg><svg style="left:1031px;top:39px;" width="6" height="4" viewBox="0 0 6 4"><path d="M0 0 L6 0 L3 3 Z" fill="#fff"/></svg><svg style="left:1047px;top:34px;" width="15" height="14" viewBox="0 0 15 14"><g opacity="0.3"><path d="M12.5 6 H6 A4 4 0 0 0 6 13.5 H8" fill="none" stroke="#fff" stroke-width="1.9"/><path d="M9.5 2 L13.5 6 L9.5 10" fill="none" stroke="#fff" stroke-width="1.9"/></g></svg><svg style="left:1066px;top:39px;" width="6" height="4" viewBox="0 0 6 4"><path d="M0 0 L6 0 L3 3 Z" fill="rgba(255,255,255,.3)"/></svg><svg style="left:1085px;top:37px;" width="7" height="9" viewBox="0 0 7 9"><rect x="0" y="0" width="7" height="1.5" fill="#fff"/><rect x="0" y="3" width="7" height="1.5" fill="#fff"/><path d="M0 5 L7 5 L3.5 8.5 Z" fill="#fff"/></svg><div class="t" style="left:1330px;top:33px;font-size:13px;color:#fff">2026 FO Duty Roster (HIEX &amp; HI)&nbsp;&nbsp;-&nbsp;&nbsp;Excel</div><div class="t" style="left:1681px;top:33px;font-size:13px;color:#fff">Lilith Zhong</div><svg style="left:1774px;top:33px;" width="14" height="12" viewBox="0 0 14 12"><rect x="0.5" y="0.5" width="13" height="11" fill="none" stroke="#fff"/><path d="M0.5 3.5 H13.5 M7 10 V5.5 M5 7.5 L7 5.5 L9 7.5" stroke="#fff" fill="none"/></svg><div class="a" style="left:1822px;top:39px;width:11px;height:1px;background:#fff"></div><div class="a" style="left:1867px;top:34px;width:11px;height:11px;border:1px solid #fff"></div><svg style="left:1912px;top:34px;" width="11" height="11" viewBox="0 0 11 11"><path d="M0 0 L11 11 M11 0 L0 11" stroke="#fff" stroke-width="1.1"/></svg><div class="a" style="left:1022px;top:58px;width:49px;height:32px;background:#f3f3f3"></div><div class="t" style="left:978px;top:66px;font-size:13px;color:#fff">文件</div><div class="t" style="left:1034px;top:66px;font-size:13px;color:#217346">开始</div><div class="t" style="left:1085px;top:66px;font-size:13px;color:#fff">插入</div><div class="t" style="left:1135px;top:66px;font-size:13px;color:#fff">页面布局</div><div class="t" style="left:1211px;top:66px;font-size:13px;color:#fff">公式</div><div class="t" style="left:1261px;top:66px;font-size:13px;color:#fff">数据</div><div class="t" style="left:1313px;top:66px;font-size:13px;color:#fff">审阅</div><div class="t" style="left:1363px;top:66px;font-size:13px;color:#fff">视图</div><div class="t" style="left:1414px;top:66px;font-size:13px;color:#fff">帮助</div><svg style="left:1466px;top:66px;" width="12" height="16" viewBox="0 0 12 16"><path d="M6 1 A5 5 0 0 1 9 10 V12 H3 V10 A5 5 0 0 1 6 1 Z" fill="none" stroke="#fff" stroke-width="1.2"/><path d="M4 14 H8" stroke="#fff" stroke-width="1.2"/></svg><div class="t" style="left:1484px;top:66px;font-size:13px;color:#fff">告诉我你想要做什么</div><svg style="left:1874px;top:64px;" width="16" height="18" viewBox="0 0 16 18"><circle cx="7" cy="5" r="4.2" fill="none" stroke="#fff" stroke-width="1.2"/><path d="M1 17 Q2 10 7 10 Q10 10 11 11" fill="none" stroke="#fff" stroke-width="1.2"/><path d="M12 11 V17 M9 14 H15" stroke="#fff" stroke-width="1.2"/></svg><div class="t" style="left:1893px;top:66px;font-size:13px;color:#fff">共享</div><div class="a" style="left:961px;top:90px;width:959px;height:95px;background:#f3f3f3;border-bottom:1px solid #d5d5d5"></div><svg style="left:974px;top:97px;" width="30" height="32" viewBox="0 0 30 32"><rect x="0" y="3" width="24" height="26" rx="1" fill="#e8c07a"/><rect x="5" y="1" width="14" height="5" rx="1" fill="#7a7a7a"/><rect x="10" y="0" width="4" height="3" fill="#7a7a7a"/><path d="M13.5 12.5 H23 L28.5 18 V31.5 H13.5 Z" fill="#fff" stroke="#777"/><path d="M23 12.5 V18 H28.5" fill="none" stroke="#777"/></svg><div class="t" style="left:973px;top:131px;font-size:13px;color:#262626">粘贴</div><svg style="left:984px;top:151px;" width="6" height="4" viewBox="0 0 6 4"><path d="M0 0 L6 0 L3 3 Z" fill="#555"/></svg><svg style="left:1011px;top:96px;" width="15" height="15" viewBox="0 0 15 15"><path d="M4 1 L10 10 M11 1 L5 10" stroke="#666" stroke-width="1.4"/><circle cx="3.5" cy="12" r="2.5" fill="none" stroke="#2e75b6" stroke-width="1.3"/><circle cx="11.5" cy="12" r="2.5" fill="none" stroke="#2e75b6" stroke-width="1.3"/></svg><svg style="left:1010px;top:120px;" width="16" height="15" viewBox="0 0 16 15"><path d="M0.5 0.5 H6 L8 2.5 V10.5 H0.5 Z" fill="#fff" stroke="#777"/><path d="M6.5 4.5 H12 L14.5 7 V14.5 H6.5 Z" fill="#fff" stroke="#777"/><path d="M2 4 H5 M2 6 H5 M2 8 H5" stroke="#2e75b6"/><path d="M8 9 H13 M8 11 H13" stroke="#2e75b6"/></svg><svg style="left:1032px;top:126px;" width="6" height="4" viewBox="0 0 6 4"><path d="M0 0 L6 0 L3 3 Z" fill="#555"/></svg><svg style="left:1010px;top:143px;" width="17" height="14" viewBox="0 0 17 14"><path d="M1 10 L6 5 L9 8 L4 13 Z" fill="#e8c07a"/><path d="M6 5 L11 0 L14 3 L9 8 Z" fill="#707070"/></svg><div class="c" style="left:974px;top:168px;width:44px;height:14px;font-size:12px;color:#262626"><span>剪贴板</span></div><svg style="left:1035px;top:173px;" width="8" height="8" viewBox="0 0 8 8"><path d="M0.5 0.5 H5 M0.5 0.5 V5" stroke="#777" fill="none"/><path d="M3 3 L7.5 7.5 M7.5 4 V7.5 H4" stroke="#777" fill="none"/></svg><div class="a" style="left:1046px;top:94px;width:1px;height:87px;background:#d2d2d2"></div><div class="a" style="left:1051px;top:101px;width:157px;height:23px;background:#fff;border:1px solid #c6c6c6"></div><div class="t" style="left:1054px;top:106px;font-size:13px;color:#262626">Arial</div><svg style="left:1197px;top:110px;" width="6" height="4" viewBox="0 0 6 4"><path d="M0 0 L6 0 L3 3 Z" fill="#444"/></svg><div class="a" style="left:1208px;top:101px;width:40px;height:23px;background:#fff;border:1px solid #c6c6c6"></div><div class="t" style="left:1211px;top:106px;font-size:13px;color:#262626">10</div><svg style="left:1237px;top:110px;" width="6" height="4" viewBox="0 0 6 4"><path d="M0 0 L6 0 L3 3 Z" fill="#444"/></svg><div class="t" style="left:1254px;top:104px;font-size:16px;color:#9a9a9a">A</div><svg style="left:1262px;top:105px;" width="6" height="4" viewBox="0 0 6 4"><path d="M0 3 L3 0 L6 3 Z" fill="#9a9a9a"/></svg><div class="t" style="left:1277px;top:108px;font-size:13px;color:#9a9a9a">A</div><svg style="left:1283px;top:106px;" width="6" height="4" viewBox="0 0 6 4"><path d="M0 0 L6 0 L3 3 Z" fill="#9a9a9a"/></svg><div class="t" style="left:1057px;top:136px;font-size:13px;font-weight:bold;color:#9a9a9a">B</div><div class="t" style="left:1080px;top:136px;font-size:13px;font-style:italic;font-family:'Liberation Serif';color:#9a9a9a">I</div><div class="t" style="left:1101px;top:135px;font-size:13px;color:#9a9a9a;text-decoration:underline">U</div><svg style="left:1119px;top:143px;" width="6" height="4" viewBox="0 0 6 4"><path d="M0 0 L6 0 L3 3 Z" fill="#aaa"/></svg><div class="a" style="left:1133px;top:133px;width:1px;height:21px;background:#d2d2d2"></div><svg style="left:1141px;top:136px;" width="14" height="14" viewBox="0 0 14 14"><g stroke="#b0b0b0" stroke-dasharray="1 1"><rect x="0.5" y="0.5" width="12" height="12" fill="none"/><path d="M6.5 0.5 V12.5 M0.5 6.5 H12.5"/></g><path d="M0 13 H13" stroke="#aaa" stroke-width="1.5"/></svg><svg style="left:1162px;top:143px;" width="6" height="4" viewBox="0 0 6 4"><path d="M0 0 L6 0 L3 3 Z" fill="#aaa"/></svg><div class="a" style="left:1176px;top:133px;width:1px;height:21px;background:#d2d2d2"></div><svg style="left:1184px;top:134px;" width="17" height="17" viewBox="0 0 17 17"><path d="M3 7 L8 2 L13 7 L8 12 Z" fill="#fff" stroke="#aaa"/><path d="M13 7 Q15 9 14 12" stroke="#aaa" stroke-width="2" fill="none"/><rect x="0" y="13" width="16" height="3" fill="#e0e0e0"/></svg><svg style="left:1205px;top:143px;" width="6" height="4" viewBox="0 0 6 4"><path d="M0 0 L6 0 L3 3 Z" fill="#aaa"/></svg><div class="t" style="left:1221px;top:134px;font-size:16px;color:#9a9a9a">A</div><svg style="left:1239px;top:143px;" width="6" height="4" viewBox="0 0 6 4"><path d="M0 0 L6 0 L3 3 Z" fill="#aaa"/></svg><div class="a" style="left:1253px;top:133px;width:1px;height:21px;background:#d2d2d2"></div><div class="t" style="left:1262px;top:134px;font-size:8px;color:#9a9a9a">wén</div><div class="t" style="left:1265px;top:142px;font-size:9px;color:#9a9a9a">文</div><svg style="left:1282px;top:143px;" width="6" height="4" viewBox="0 0 6 4"><path d="M0 0 L6 0 L3 3 Z" fill="#aaa"/></svg><div class="c" style="left:1136px;top:168px;width:54px;height:14px;font-size:12px;color:#262626"><span>字体</span></div><svg style="left:1285px;top:173px;" width="8" height="8" viewBox="0 0 8 8"><path d="M0.5 0.5 H5 M0.5 0.5 V5" stroke="#aaa" fill="none"/><path d="M3 3 L7.5 7.5 M7.5 4 V7.5 H4" stroke="#aaa" fill="none"/></svg><div class="a" style="left:1296px;top:94px;width:1px;height:87px;background:#d2d2d2"></div><svg style="left:1305px;top:103px;" width="14" height="11" viewBox="0 0 14 11"><path d="M0 1 H14 M0 4 H14 M0 7 H14" stroke="#9a9a9a" stroke-width="1"/></svg><svg style="left:1327px;top:107px;" width="14" height="11" viewBox="0 0 14 11"><path d="M0 1 H14 M0 4 H14 M0 7 H14" stroke="#9a9a9a" stroke-width="1"/></svg><svg style="left:1349px;top:112px;" width="14" height="11" viewBox="0 0 14 11"><path d="M0 1 H14 M0 4 H14 M0 7 H14" stroke="#9a9a9a" stroke-width="1"/></svg><svg style="left:1373px;top:104px;" width="18" height="16" viewBox="0 0 18 16"><text x="0" y="11" font-size="9" fill="#9a9a9a" transform="rotate(-45 6 8)" font-family="Liberation Sans">ab</text><path d="M5 15 L16 4 M13 4 H16 V7" stroke="#9a9a9a" fill="none"/></svg><svg style="left:1392px;top:111px;" width="6" height="4" viewBox="0 0 6 4"><path d="M0 0 L6 0 L3 3 Z" fill="#aaa"/></svg><svg style="left:1305px;top:137px;" width="14" height="11" viewBox="0 0 14 11"><path d="M0 1 H14 M0 4 H10 M0 7 H14 M0 10 H10" stroke="#9a9a9a" stroke-width="1"/></svg><svg style="left:1327px;top:137px;" width="14" height="11" viewBox="0 0 14 11"><path d="M0 1 H14 M2 4 H12 M0 7 H14 M2 10 H12" stroke="#9a9a9a" stroke-width="1"/></svg><svg style="left:1349px;top:137px;" width="14" height="11" viewBox="0 0 14 11"><path d="M0 1 H14 M4 4 H14 M0 7 H14 M4 10 H14" stroke="#9a9a9a" stroke-width="1"/></svg><svg style="left:1373px;top:136px;" width="17" height="13" viewBox="0 0 17 13"><path d="M6 1 H16 M8 4.5 H16 M8 8 H16 M0 12 H16" stroke="#9a9a9a"/><path d="M0 5.5 H6 M3 3 L0.5 5.5 L3 8" stroke="#9a9a9a" stroke-width="1.6" fill="none"/></svg><svg style="left:1395px;top:136px;" width="17" height="13" viewBox="0 0 17 13"><path d="M0 1 H16 M8 4.5 H16 M8 8 H16 M0 12 H16" stroke="#9a9a9a"/><path d="M0 5.5 H6 M3.5 3 L6 5.5 L3.5 8" stroke="#9a9a9a" stroke-width="1.6" fill="none"/></svg><div class="a" style="left:1418px;top:100px;width:1px;height:55px;background:#d2d2d2"></div><svg style="left:1428px;top:103px;" width="13" height="16" viewBox="0 0 13 16"><text x="0" y="7" font-size="8" fill="#9a9a9a" font-family="Liberation Sans">ab</text><text x="0" y="15" font-size="8" fill="#9a9a9a" font-family="Liberation Sans">c</text><path d="M6 12 H11 V9" stroke="#9a9a9a" fill="none"/></svg><svg style="left:1426px;top:135px;" width="15" height="14" viewBox="0 0 15 14"><rect x="0.5" y="0.5" width="14" height="13" fill="#fff" stroke="#aaa"/><path d="M0.5 4.5 H14.5 M0.5 9.5 H14.5" stroke="#aaa"/><path d="M3 7 H12" stroke="#aaa" fill="none"/></svg><div class="a" style="left:1441px;top:135px;width:2px;height:15px;background:#9a9a9a"></div><svg style="left:1448px;top:143px;" width="6" height="4" viewBox="0 0 6 4"><path d="M0 0 L6 0 L3 3 Z" fill="#aaa"/></svg><div class="c" style="left:1340px;top:168px;width:62px;height:14px;font-size:12px;color:#262626"><span>对齐方式</span></div><svg style="left:1451px;top:173px;" width="8" height="8" viewBox="0 0 8 8"><path d="M0.5 0.5 H5 M0.5 0.5 V5" stroke="#aaa" fill="none"/><path d="M3 3 L7.5 7.5 M7.5 4 V7.5 H4" stroke="#aaa" fill="none"/></svg><div class="a" style="left:1462px;top:94px;width:1px;height:87px;background:#d2d2d2"></div><div class="a" style="left:1467px;top:93px;width:78px;height:23px;background:#fff;border:1px solid #c6c6c6"></div><div class="t" style="left:1470px;top:98px;font-size:12px;color:#9a9a9a">文本</div><svg style="left:1534px;top:103px;" width="6" height="4" viewBox="0 0 6 4"><path d="M0 0 L6 0 L3 3 Z" fill="#aaa"/></svg><svg style="left:1470px;top:119px;" width="17" height="17" viewBox="0 0 17 17"><rect x="0.5" y="0.5" width="15" height="8" fill="#fff" stroke="#aaa"/><circle cx="8" cy="4.5" r="2" fill="#aaa"/><ellipse cx="11" cy="10" rx="4" ry="1.6" fill="#ddd"/><ellipse cx="10" cy="13" rx="4" ry="1.6" fill="#ddd"/><ellipse cx="11" cy="16" rx="4" ry="1.4" fill="#ddd"/></svg><svg style="left:1491px;top:126px;" width="6" height="4" viewBox="0 0 6 4"><path d="M0 0 L6 0 L3 3 Z" fill="#555"/></svg><div class="t" style="left:1506px;top:120px;font-size:15px;color:#9a9a9a">%</div><div class="t" style="left:1531px;top:119px;font-size:14px;font-weight:bold;color:#9a9a9a">,</div><svg style="left:1470px;top:143px;" width="14" height="14" viewBox="0 0 14 14"><text x="5" y="6" font-size="7" fill="#9a9a9a" font-family="Liberation Sans">.0</text><text x="2" y="13" font-size="7" fill="#9a9a9a" font-family="Liberation Sans">.00</text><path d="M0.5 3.5 H5 M2.5 1.5 L0.5 3.5 L2.5 5.5" stroke="#9a9a9a" fill="none"/></svg><svg style="left:1492px;top:143px;" width="14" height="14" viewBox="0 0 14 14"><text x="3" y="6" font-size="7" fill="#9a9a9a" font-family="Liberation Sans">.00</text><text x="6" y="13" font-size="7" fill="#9a9a9a" font-family="Liberation Sans">.0</text><path d="M0 10.5 H5 M3 8.5 L5 10.5 L3 12.5" stroke="#9a9a9a" fill="none"/></svg><div class="c" style="left:1472px;top:168px;width:52px;height:14px;font-size:12px;color:#262626"><span>数字</span></div><svg style="left:1541px;top:173px;" width="8" height="8" viewBox="0 0 8 8"><path d="M0.5 0.5 H5 M0.5 0.5 V5" stroke="#aaa" fill="none"/><path d="M3 3 L7.5 7.5 M7.5 4 V7.5 H4" stroke="#aaa" fill="none"/></svg><div class="a" style="left:1549px;top:94px;width:1px;height:87px;background:#d2d2d2"></div><svg style="left:1557px;top:96px;" width="16" height="16" viewBox="0 0 16 16"><rect x="0.5" y="0.5" width="11" height="10" fill="#fff" stroke="#aaa"/><rect x="1" y="1" width="5" height="4" fill="#aaa"/><rect x="6.5" y="6.5" width="9" height="9" fill="#fff" stroke="#aaa"/><text x="8" y="14" font-size="8" fill="#999" font-family="Liberation Sans">≠</text></svg><div class="t" style="left:1576px;top:99px;font-size:12px;color:#a6a6a6">条件格式</div><svg style="left:1627px;top:103px;" width="6" height="4" viewBox="0 0 6 4"><path d="M0 0 L6 0 L3 3 Z" fill="#bbb"/></svg><svg style="left:1557px;top:119px;" width="16" height="16" viewBox="0 0 16 16"><rect x="0.5" y="0.5" width="14" height="12" fill="#fff" stroke="#aaa"/><path d="M0.5 4.5 H14.5 M0.5 8.5 H14.5 M5 0.5 V12.5 M10 0.5 V12.5" stroke="#bbb"/><path d="M15 5 L9 13 L5 15 L7 11 Z" fill="#aaa"/></svg><div class="t" style="left:1576px;top:122px;font-size:12px;color:#a6a6a6">套用表格格式</div><svg style="left:1651px;top:126px;" width="6" height="4" viewBox="0 0 6 4"><path d="M0 0 L6 0 L3 3 Z" fill="#bbb"/></svg><svg style="left:1557px;top:142px;" width="16" height="16" viewBox="0 0 16 16"><rect x="0.5" y="0.5" width="14" height="12" fill="#fff" stroke="#aaa"/><path d="M0.5 4.5 H14.5 M0.5 8.5 H14.5 M5 0.5 V12.5 M10 0.5 V12.5" stroke="#bbb"/><path d="M15 5 L9 13 L5 15 L7 11 Z" fill="#aaa"/></svg><div class="t" style="left:1576px;top:145px;font-size:12px;color:#a6a6a6">单元格样式</div><svg style="left:1640px;top:149px;" width="6" height="4" viewBox="0 0 6 4"><path d="M0 0 L6 0 L3 3 Z" fill="#bbb"/></svg><div class="c" style="left:1585px;top:168px;width:48px;height:14px;font-size:12px;color:#262626"><span>样式</span></div><div class="a" style="left:1668px;top:94px;width:1px;height:87px;background:#d2d2d2"></div><svg style="left:1675px;top:96px;" width="16" height="16" viewBox="0 0 16 16"><rect x="0.5" y="0.5" width="5" height="4" fill="none" stroke="#aaa"/><rect x="0.5" y="6.5" width="5" height="4" fill="none" stroke="#aaa"/><rect x="0.5" y="12.5" width="5" height="3" fill="none" stroke="#aaa"/><rect x="7.5" y="6.5" width="8" height="4" fill="none" stroke="#aaa"/></svg><div class="t" style="left:1695px;top:100px;font-size:12px;color:#a6a6a6">插入</div><svg style="left:1728px;top:103px;" width="6" height="4" viewBox="0 0 6 4"><path d="M0 0 L6 0 L3 3 Z" fill="#555"/></svg><svg style="left:1675px;top:119px;" width="16" height="16" viewBox="0 0 16 16"><rect x="0.5" y="0.5" width="5" height="4" fill="none" stroke="#aaa"/><rect x="0.5" y="6.5" width="5" height="4" fill="none" stroke="#aaa"/><rect x="0.5" y="12.5" width="5" height="3" fill="none" stroke="#aaa"/><path d="M8 6 L14 12 M14 6 L8 12" stroke="#aaa"/></svg><div class="t" style="left:1695px;top:123px;font-size:12px;color:#a6a6a6">删除</div><svg style="left:1728px;top:126px;" width="6" height="4" viewBox="0 0 6 4"><path d="M0 0 L6 0 L3 3 Z" fill="#555"/></svg><svg style="left:1675px;top:142px;" width="16" height="16" viewBox="0 0 16 16"><path d="M1 1 H15 M1 0 V3 M15 0 V3" stroke="#2e75b6"/><rect x="0.5" y="4.5" width="14" height="11" fill="#fff" stroke="#666"/><path d="M0.5 8.5 H14.5 M0.5 12 H14.5 M5 4.5 V15.5 M10 4.5 V15.5" stroke="#888"/><rect x="1" y="9" width="4" height="3" fill="#2e75b6"/></svg><div class="t" style="left:1695px;top:145px;font-size:12px;color:#262626">格式</div><svg style="left:1722px;top:149px;" width="6" height="4" viewBox="0 0 6 4"><path d="M0 0 L6 0 L3 3 Z" fill="#555"/></svg><div class="c" style="left:1682px;top:168px;width:48px;height:14px;font-size:12px;color:#262626"><span>单元格</span></div><div class="a" style="left:1743px;top:94px;width:1px;height:87px;background:#d2d2d2"></div><div class="t" style="left:1751px;top:95px;font-size:17px;color:#9a9a9a">Σ</div><svg style="left:1772px;top:103px;" width="6" height="4" viewBox="0 0 6 4"><path d="M0 0 L6 0 L3 3 Z" fill="#555"/></svg><svg style="left:1787px;top:96px;" width="15" height="16" viewBox="0 0 15 16"><text x="0" y="7" font-size="7" fill="#aaa" font-family="Liberation Sans">A</text><text x="0" y="15" font-size="7" fill="#aaa" font-family="Liberation Sans">Z</text><path d="M7 4 H14 L11.5 8 V12 H9.5 V8 Z" fill="#aaa"/></svg><svg style="left:1805px;top:103px;" width="6" height="4" viewBox="0 0 6 4"><path d="M0 0 L6 0 L3 3 Z" fill="#bbb"/></svg><svg style="left:1752px;top:119px;" width="15" height="16" viewBox="0 0 15 16"><rect x="0.5" y="0.5" width="13" height="14" fill="#fff" stroke="#666"/><rect x="0.5" y="0.5" width="13" height="2" fill="#666"/><path d="M7 4 V12 M4 9 L7 12 L10 9" stroke="#2e75b6" stroke-width="1.8" fill="none"/></svg><svg style="left:1770px;top:126px;" width="6" height="4" viewBox="0 0 6 4"><path d="M0 0 L6 0 L3 3 Z" fill="#555"/></svg><svg style="left:1787px;top:120px;" width="14" height="14" viewBox="0 0 14 14"><circle cx="8.5" cy="5.5" r="4" fill="none" stroke="#2e75b6" stroke-width="1.8"/><path d="M5.5 8.5 L1 13" stroke="#2e75b6" stroke-width="2.2"/></svg><svg style="left:1805px;top:126px;" width="6" height="4" viewBox="0 0 6 4"><path d="M0 0 L6 0 L3 3 Z" fill="#555"/></svg><svg style="left:1752px;top:143px;" width="14" height="14" viewBox="0 0 14 14"><g transform="rotate(-45 7 7)"><rect x="0" y="4" width="14" height="6" rx="1" fill="#e5728a"/><rect x="0" y="4" width="3" height="6" fill="#f2a5b5"/></g></svg><svg style="left:1770px;top:149px;" width="6" height="4" viewBox="0 0 6 4"><path d="M0 0 L6 0 L3 3 Z" fill="#555"/></svg><div class="c" style="left:1758px;top:168px;width:48px;height:14px;font-size:12px;color:#262626"><span>编辑</span></div><div class="a" style="left:1820px;top:94px;width:1px;height:87px;background:#d2d2d2"></div><div class="a" style="left:961px;top:185px;width:959px;height:70px;background:#e6e6e6"></div><div class="a" style="left:966px;top:195px;width:102px;height:28px;background:#fff;border:1px solid #c6c6c6"></div><div class="t" style="left:973px;top:203px;font-size:13px;color:#262626">AP12</div><svg style="left:1053px;top:207px;" width="8" height="5" viewBox="0 0 8 5"><path d="M0 0 L8 0 L4 4 Z" fill="#555"/></svg><div class="a" style="left:1082px;top:204px;width:2px;height:2px;background:#9a9a9a"></div><div class="a" style="left:1082px;top:209px;width:2px;height:2px;background:#9a9a9a"></div><div class="a" style="left:1082px;top:214px;width:2px;height:2px;background:#9a9a9a"></div><div class="a" style="left:1098px;top:195px;width:110px;height:28px;background:#fff;border:1px solid #c6c6c6"></div><svg style="left:1111px;top:204px;" width="12" height="11" viewBox="0 0 12 11"><path d="M1 1 L11 10 M11 1 L1 10" stroke="#b0b0b0" stroke-width="1.4"/></svg><svg style="left:1147px;top:203px;" width="14" height="12" viewBox="0 0 14 12"><path d="M1 6 L5 10 L13 1" stroke="#c8c8c8" stroke-width="2" fill="none"/></svg><div class="t" style="left:1183px;top:202px;font-size:14px;font-family:'Liberation Serif';color:#555"><i>f</i><span style='font-size:10px'>x</span></div><div class="a" style="left:1211px;top:195px;width:709px;height:50px;background:#fff;border:1px solid #c6c6c6;border-right:none"></div><div class="a" style="left:961px;top:255px;width:959px;height:15px;background:#e6e6e6;border-bottom:1px solid #ababab"></div><svg style="left:972px;top:260px;" width="9" height="9" viewBox="0 0 9 9"><path d="M9 0 V9 H0 Z" fill="#c4c4c4"/></svg><div class="a" style="left:983px;top:256px;width:1px;height:14px;background:#c8c8c8"></div><div class="c" style="left:983px;top:256px;width:122px;height:14px;font-size:12px;color:#444;line-height:1"><span>A</span></div><div class="a" style="left:1105px;top:256px;width:1px;height:14px;background:#c8c8c8"></div><div class="c" style="left:1105px;top:256px;width:97px;height:14px;font-size:12px;color:#444;line-height:1"><span>B</span></div><div class="a" style="left:1202px;top:256px;width:1px;height:14px;background:#c8c8c8"></div><div class="c" style="left:1202px;top:256px;width:55px;height:14px;font-size:12px;color:#444;line-height:1"><span>C</span></div><div class="a" style="left:1257px;top:256px;width:1px;height:14px;background:#c8c8c8"></div><div class="c" style="left:1257px;top:256px;width:82px;height:14px;font-size:12px;color:#444;line-height:1"><span>D</span></div><div class="a" style="left:1339px;top:256px;width:1px;height:14px;background:#c8c8c8"></div><div class="c" style="left:1339px;top:256px;width:100px;height:14px;font-size:12px;color:#444;line-height:1"><span>E</span></div><div class="a" style="left:1439px;top:256px;width:1px;height:14px;background:#c8c8c8"></div><div class="c" style="left:1439px;top:256px;width:41px;height:14px;font-size:12px;color:#444;line-height:1"><span>F</span></div><div class="a" style="left:1480px;top:256px;width:1px;height:14px;background:#c8c8c8"></div><div class="c" style="left:1480px;top:256px;width:39px;height:14px;font-size:12px;color:#444;line-height:1"><span>G</span></div><div class="a" style="left:1519px;top:256px;width:1px;height:14px;background:#c8c8c8"></div><div class="c" style="left:1519px;top:256px;width:38px;height:14px;font-size:12px;color:#444;line-height:1"><span>J</span></div><div class="a" style="left:1557px;top:256px;width:1px;height:14px;background:#c8c8c8"></div><div class="c" style="left:1557px;top:256px;width:39px;height:14px;font-size:12px;color:#444;line-height:1"><span>K</span></div><div class="a" style="left:1596px;top:256px;width:1px;height:14px;background:#c8c8c8"></div><div class="c" style="left:1596px;top:256px;width:40px;height:14px;font-size:12px;color:#444;line-height:1"><span>L</span></div><div class="a" style="left:1636px;top:256px;width:1px;height:14px;background:#c8c8c8"></div><div class="c" style="left:1636px;top:256px;width:40px;height:14px;font-size:12px;color:#444;line-height:1"><span>M</span></div><div class="a" style="left:1676px;top:256px;width:1px;height:14px;background:#c8c8c8"></div><div class="c" style="left:1676px;top:256px;width:40px;height:14px;font-size:12px;color:#444;line-height:1"><span>N</span></div><div class="a" style="left:1716px;top:256px;width:1px;height:14px;background:#c8c8c8"></div><div class="c" style="left:1716px;top:256px;width:40px;height:14px;font-size:12px;color:#444;line-height:1"><span>O</span></div><div class="a" style="left:1756px;top:256px;width:1px;height:14px;background:#c8c8c8"></div><div class="c" style="left:1756px;top:256px;width:40px;height:14px;font-size:12px;color:#444;line-height:1"><span>P</span></div><div class="a" style="left:1796px;top:256px;width:1px;height:14px;background:#c8c8c8"></div><div class="c" style="left:1796px;top:256px;width:39px;height:14px;font-size:12px;color:#444;line-height:1"><span>Q</span></div><div class="a" style="left:1835px;top:256px;width:1px;height:14px;background:#c8c8c8"></div><div class="c" style="left:1835px;top:256px;width:40px;height:14px;font-size:12px;color:#444;line-height:1"><span>R</span></div><div class="a" style="left:1875px;top:256px;width:1px;height:14px;background:#c8c8c8"></div><div class="c" style="left:1875px;top:256px;width:40px;height:14px;font-size:12px;color:#444;line-height:1"><span>S</span></div><div class="a" style="left:1915px;top:256px;width:1px;height:14px;background:#c8c8c8"></div><div class="c" style="left:1915px;top:256px;width:40px;height:14px;font-size:12px;color:#444;line-height:1"><span>T</span></div><div class="a" style="left:1517px;top:256px;width:1px;height:14px;background:#9b9b9b"></div><div class="a" style="left:1521px;top:256px;width:1px;height:14px;background:#9b9b9b"></div><div class="a" style="left:983px;top:270px;width:937px;height:734px;background:#fff"></div><div class="a" style="left:961px;top:270px;width:23px;height:734px;background:#e6e6e6;border-right:1px solid #ababab"></div><div class="a" style="left:961px;top:357px;width:21px;height:1px;background:#c8c8c8"></div><div class="t" style="left:965px;top:345px;font-size:12px;color:#444">1</div><div class="a" style="left:961px;top:399px;width:21px;height:1px;background:#c8c8c8"></div><div class="t" style="left:965px;top:387px;font-size:12px;color:#444">2</div><div class="a" style="left:961px;top:433px;width:21px;height:1px;background:#c8c8c8"></div><div class="t" style="left:965px;top:421px;font-size:12px;color:#444">3</div><div class="a" style="left:961px;top:471px;width:21px;height:1px;background:#c8c8c8"></div><div class="t" style="left:965px;top:459px;font-size:12px;color:#444">4</div><div class="a" style="left:961px;top:505px;width:21px;height:1px;background:#c8c8c8"></div><div class="t" style="left:965px;top:493px;font-size:12px;color:#444">5</div><div class="a" style="left:961px;top:537px;width:21px;height:1px;background:#c8c8c8"></div><div class="t" style="left:965px;top:525px;font-size:12px;color:#444">6</div><div class="a" style="left:961px;top:569px;width:21px;height:1px;background:#c8c8c8"></div><div class="t" style="left:965px;top:557px;font-size:12px;color:#444">7</div><div class="a" style="left:961px;top:601px;width:21px;height:1px;background:#c8c8c8"></div><div class="t" style="left:965px;top:589px;font-size:12px;color:#444">8</div><div class="a" style="left:961px;top:633px;width:21px;height:1px;background:#c8c8c8"></div><div class="t" style="left:965px;top:621px;font-size:12px;color:#444">9</div><div class="a" style="left:961px;top:665px;width:21px;height:1px;background:#c8c8c8"></div><div class="t" style="left:965px;top:653px;font-size:12px;color:#444">10</div><div class="a" style="left:961px;top:697px;width:21px;height:1px;background:#c8c8c8"></div><div class="t" style="left:965px;top:685px;font-size:12px;color:#444">11</div><div class="a" style="left:961px;top:729px;width:21px;height:1px;background:#c8c8c8"></div><div class="t" style="left:965px;top:717px;font-size:12px;color:#217346">12</div><div class="a" style="left:961px;top:761px;width:21px;height:1px;background:#c8c8c8"></div><div class="t" style="left:965px;top:749px;font-size:12px;color:#444">13</div><div class="a" style="left:961px;top:793px;width:21px;height:1px;background:#c8c8c8"></div><div class="t" style="left:965px;top:781px;font-size:12px;color:#444">14</div><div class="a" style="left:961px;top:825px;width:21px;height:1px;background:#c8c8c8"></div><div class="t" style="left:965px;top:813px;font-size:12px;color:#444">15</div><div class="a" style="left:961px;top:857px;width:21px;height:1px;background:#c8c8c8"></div><div class="t" style="left:965px;top:845px;font-size:12px;color:#444">16</div><div class="a" style="left:961px;top:889px;width:21px;height:1px;background:#c8c8c8"></div><div class="t" style="left:965px;top:877px;font-size:12px;color:#444">17</div><div class="a" style="left:961px;top:921px;width:21px;height:1px;background:#c8c8c8"></div><div class="t" style="left:965px;top:909px;font-size:12px;color:#444">18</div><div class="a" style="left:961px;top:953px;width:21px;height:1px;background:#c8c8c8"></div><div class="t" style="left:965px;top:941px;font-size:12px;color:#444">19</div><div class="a" style="left:961px;top:983px;width:21px;height:1px;background:#c8c8c8"></div><div class="t" style="left:965px;top:971px;font-size:12px;color:#444">20</div><div class="a" style="left:961px;top:1004px;width:21px;height:1px;background:#c8c8c8"></div><div class="a" style="left:961px;top:697px;width:23px;height:32px;background:#d2d2d2;border-right:2px solid #217346"></div><div class="t" style="left:965px;top:717px;font-size:12px;color:#217346">12</div><div class="a" style="left:1519px;top:270px;width:1px;height:734px;background:#a6a6a6"></div><svg style="left:987px;top:287px;" width="118" height="56" viewBox="0 0 118 56">
<g stroke="#1f6e43" stroke-linecap="round" fill="none">
<path d="M13.5 5 L7.5 25" stroke-width="3.4"/>
<path d="M24.5 3 L17 29" stroke-width="3.4"/>
<path d="M1.5 19.5 Q10 13 31 11" stroke-width="2.6"/>
</g>
<text x="40" y="13" font-size="13" font-weight="bold" font-style="italic" fill="#1f6e43" font-family="Liberation Sans" textLength="61" lengthAdjust="spacingAndGlyphs">假日酒店</text>
<text x="40" y="27.5" font-size="14.5" font-weight="bold" font-style="italic" fill="#1f6e43" font-family="Liberation Sans" textLength="75" lengthAdjust="spacingAndGlyphs">Holiday Inn</text>
<text x="40" y="37.5" font-size="4.5" fill="#9a9a9a" font-family="Liberation Sans" textLength="44" lengthAdjust="spacingAndGlyphs">洲际酒店集团旗下</text>
<text x="40" y="46" font-size="3.5" fill="#5a8a6a" font-family="Liberation Sans" textLength="16" lengthAdjust="spacingAndGlyphs">贵阳机场</text>
<text x="40" y="51" font-size="4" font-weight="bold" fill="#1f6e43" font-family="Liberation Sans" textLength="43" lengthAdjust="spacingAndGlyphs">GUIYANG AIRPORT</text>
</svg><div class="t" style="left:1745px;top:298px;font-size:12.7px;font-weight:bold;color:#000">ROOMS-FO Monthly Duty Roster</div><div class="t" style="left:1758px;top:316px;font-size:15px;font-weight:bold;color:#000">房务部-前厅月度排班表(2026</div><div class="a" style="left:1520px;top:358px;width:316px;height:41px;background:#e2efda"></div><div class="a" style="left:1836px;top:358px;width:84px;height:41px;background:#c6e0b4"></div><div class="c" style="left:983px;top:357px;width:456px;height:42px;font-size:14.8px;font-weight:bold"><span>Period</span></div><div class="c" style="left:1439px;top:357px;width:80px;height:42px;font-size:14.3px;font-weight:bold"><span>Up.</span></div><div class="c" style="left:1519px;top:357px;width:316px;height:42px;font-size:9.2px;font-weight:bold"><span>1st Week 第一周</span></div><div class="a" style="left:983px;top:357px;width:937px;height:1px;background:#000"></div><div class="a" style="left:983px;top:399px;width:937px;height:1px;background:#000"></div><div class="c" style="left:983px;top:399px;width:122px;height:72px;font-size:11.2px;font-weight:bold;line-height:1.25"><span>Name of Staff<br>员工姓名</span></div><div class="c" style="left:1105px;top:399px;width:97px;height:72px;font-size:11.2px;font-weight:bold;line-height:1.25"><span>Employee ID<br><span style='font-weight:normal'>员工号</span></span></div><div class="c" style="left:1202px;top:399px;width:55px;height:72px;font-size:11.2px;font-weight:bold;line-height:1.25"><span>Position<br><span style='font-weight:normal'>职位</span></span></div><div class="c" style="left:1257px;top:399px;width:82px;height:72px;font-size:11.2px;font-weight:bold;line-height:1.25"><span>Contact No.<br><span style='font-weight:normal'>联系方式</span></span></div><div class="c" style="left:1339px;top:399px;width:100px;height:72px;font-size:11.2px;font-weight:bold;line-height:1.25"><span>Remark<br>备注</span></div><div class="c" style="left:1439px;top:399px;width:41px;height:106px;font-size:10px;font-weight:bold;line-height:1.3"><span>OT<br>小时</span></div><div class="c" style="left:1480px;top:399px;width:39px;height:106px;font-size:10px;font-weight:bold;line-height:1.3"><span>AL<br>天数</span></div><div class="a" style="left:1519px;top:399px;width:38px;height:34px;background:#c65911"></div><div class="c" style="left:1519px;top:399px;width:38px;height:34px;font-size:8.6px;font-weight:bold"><span>Sun</span></div><div class="c" style="left:1519px;top:433px;width:38px;height:38px;font-size:9.1px;font-weight:bold"><span>21-Dec</span></div><div class="c" style="left:1519px;top:471px;width:38px;height:34px;font-size:9.2px;font-weight:bold"><span>11/3</span></div><div class="c" style="left:1557px;top:399px;width:39px;height:34px;font-size:8.6px;font-weight:bold"><span>Mon</span></div><div class="c" style="left:1557px;top:433px;width:39px;height:38px;font-size:9.1px;font-weight:bold"><span>22-Dec</span></div><div class="c" style="left:1557px;top:471px;width:39px;height:34px;font-size:9.2px;font-weight:bold"><span>11/8</span></div><div class="c" style="left:1596px;top:399px;width:40px;height:34px;font-size:8.6px;font-weight:bold"><span>Tue</span></div><div class="c" style="left:1596px;top:433px;width:40px;height:38px;font-size:9.1px;font-weight:bold"><span>23-Dec</span></div><div class="c" style="left:1596px;top:471px;width:40px;height:34px;font-size:9.2px;font-weight:bold"><span>38/33</span></div><div class="c" style="left:1636px;top:399px;width:40px;height:34px;font-size:8.6px;font-weight:bold"><span>Wed</span></div><div class="c" style="left:1636px;top:433px;width:40px;height:38px;font-size:9.1px;font-weight:bold"><span>24-Dec</span></div><div class="c" style="left:1636px;top:471px;width:40px;height:34px;font-size:9.2px;font-weight:bold"><span>22/16</span></div><div class="c" style="left:1676px;top:399px;width:40px;height:34px;font-size:8.6px;font-weight:bold"><span>Thu</span></div><div class="c" style="left:1676px;top:433px;width:40px;height:38px;font-size:9.1px;font-weight:bold"><span>25-Dec</span></div><div class="c" style="left:1676px;top:471px;width:40px;height:34px;font-size:9.2px;font-weight:bold"><span>47/41</span></div><div class="c" style="left:1716px;top:399px;width:40px;height:34px;font-size:8.6px;font-weight:bold"><span>Fri</span></div><div class="c" style="left:1716px;top:433px;width:40px;height:38px;font-size:9.1px;font-weight:bold"><span>26-Dec</span></div><div class="c" style="left:1716px;top:471px;width:40px;height:34px;font-size:9.2px;font-weight:bold"><span>26/19</span></div><div class="a" style="left:1756px;top:399px;width:40px;height:34px;background:#c65911"></div><div class="c" style="left:1756px;top:399px;width:40px;height:34px;font-size:8.6px;font-weight:bold"><span>Sat</span></div><div class="c" style="left:1756px;top:433px;width:40px;height:38px;font-size:9.1px;font-weight:bold"><span>27-Dec</span></div><div class="c" style="left:1756px;top:471px;width:40px;height:34px;font-size:9.2px;font-weight:bold"><span>24/19</span></div><div class="a" style="left:1796px;top:399px;width:39px;height:34px;background:#c65911"></div><div class="c" style="left:1796px;top:399px;width:39px;height:34px;font-size:8.6px;font-weight:bold"><span>Sun</span></div><div class="c" style="left:1796px;top:433px;width:39px;height:38px;font-size:9.1px;font-weight:bold"><span>28-Dec</span></div><div class="c" style="left:1796px;top:471px;width:39px;height:34px;font-size:9.2px;font-weight:bold"><span>14/8</span></div><div class="c" style="left:1835px;top:399px;width:40px;height:34px;font-size:8.6px;font-weight:bold"><span>Mon</span></div><div class="c" style="left:1835px;top:433px;width:40px;height:38px;font-size:9.1px;font-weight:bold"><span>29-Dec</span></div><div class="c" style="left:1835px;top:471px;width:40px;height:34px;font-size:9.2px;font-weight:bold"><span>14/8</span></div><div class="c" style="left:1875px;top:399px;width:40px;height:34px;font-size:8.6px;font-weight:bold"><span>Tue</span></div><div class="c" style="left:1875px;top:433px;width:40px;height:38px;font-size:9.1px;font-weight:bold"><span>30-Dec</span></div><div class="c" style="left:1875px;top:471px;width:40px;height:34px;font-size:9.2px;font-weight:bold"><span>14/8</span></div><div class="c" style="left:1915px;top:399px;width:40px;height:34px;font-size:8.6px;font-weight:bold"><span>Wed</span></div><div class="c" style="left:1915px;top:433px;width:40px;height:38px;font-size:9.1px;font-weight:bold"><span>31-Dec</span></div><div class="c" style="left:1915px;top:471px;width:40px;height:34px;font-size:9.2px;font-weight:bold"><span>14/8</span></div><div class="c" style="left:983px;top:471px;width:356px;height:34px;font-size:11px;font-weight:bold"><span>KWEAP-HI Rooms Forecast</span></div><div class="a" style="left:1519px;top:505px;width:38px;height:32px;background:#ffff00"></div><div class="c" style="left:1519px;top:505px;width:38px;height:32px;font-size:9.3px;color:#000"><span>O</span></div><div class="a" style="left:1557px;top:505px;width:39px;height:32px;background:#ffff00"></div><div class="c" style="left:1557px;top:505px;width:39px;height:32px;font-size:9.3px;color:#000"><span>O</span></div><div class="a" style="left:1596px;top:505px;width:40px;height:32px;background:#c0c0c0"></div><div class="c" style="left:1596px;top:505px;width:40px;height:32px;font-size:9.3px;color:#000"><span>G</span></div><div class="a" style="left:1636px;top:505px;width:40px;height:32px;background:#c0c0c0"></div><div class="c" style="left:1636px;top:505px;width:40px;height:32px;font-size:9.3px;color:#000"><span>G</span></div><div class="a" style="left:1676px;top:505px;width:40px;height:32px;background:#c0c0c0"></div><div class="c" style="left:1676px;top:505px;width:40px;height:32px;font-size:9.3px;color:#000"><span>G</span></div><div class="a" style="left:1716px;top:505px;width:40px;height:32px;background:#ff0000"></div><div class="c" style="left:1716px;top:505px;width:40px;height:32px;font-size:9.3px;color:#fff"><span>A</span></div><div class="a" style="left:1756px;top:505px;width:40px;height:32px;background:#ffff00"></div><div class="c" style="left:1756px;top:505px;width:40px;height:32px;font-size:9.3px;color:#000"><span>O</span></div><div class="a" style="left:1796px;top:505px;width:39px;height:32px;background:#ffff00"></div><div class="c" style="left:1796px;top:505px;width:39px;height:32px;font-size:9.3px;color:#000"><span>O</span></div><div class="a" style="left:1835px;top:505px;width:40px;height:32px;background:#ff0000"></div><div class="c" style="left:1835px;top:505px;width:40px;height:32px;font-size:9.3px;color:#fff"><span>A</span></div><div class="a" style="left:1875px;top:505px;width:40px;height:32px;background:#ff0000"></div><div class="c" style="left:1875px;top:505px;width:40px;height:32px;font-size:9.3px;color:#fff"><span>A</span></div><div class="a" style="left:1915px;top:505px;width:40px;height:32px;background:#ff0000"></div><div class="c" style="left:1915px;top:505px;width:40px;height:32px;font-size:9.3px;color:#fff"><span>A</span></div><div class="c" style="left:983px;top:505px;width:122px;height:32px;font-size:10.67px"><span>Lilith Zhong 钟晨晨</span></div><div class="c" style="left:1105px;top:505px;width:97px;height:32px;font-size:10.67px"><span>000055</span></div><div class="c" style="left:1202px;top:505px;width:55px;height:32px;font-size:10.67px"><span>AFOM</span></div><div class="c" style="left:1257px;top:505px;width:82px;height:32px;font-size:10.67px"><span>17784914220</span></div><div class="c" style="left:1339px;top:505px;width:100px;height:32px;font-size:11px;font-weight:bold;color:#cc0000;letter-spacing:.3px"><span>AFOM</span></div><div class="c" style="left:1439px;top:505px;width:41px;height:32px;font-size:11px;font-weight:bold"><span>76.5</span></div><div class="c" style="left:1480px;top:505px;width:39px;height:32px;font-size:11px;font-weight:bold"><span>3</span></div><div class="a" style="left:1519px;top:569px;width:38px;height:32px;background:#ffff00"></div><div class="c" style="left:1519px;top:569px;width:38px;height:32px;font-size:9.3px;color:#000"><span>O</span></div><div class="a" style="left:1557px;top:569px;width:39px;height:32px;background:#ff0000"></div><div class="c" style="left:1557px;top:569px;width:39px;height:32px;font-size:9.3px;color:#fff"><span>A</span></div><div class="a" style="left:1596px;top:569px;width:40px;height:32px;background:#ff0000"></div><div class="c" style="left:1596px;top:569px;width:40px;height:32px;font-size:9.3px;color:#fff"><span>A</span></div><div class="a" style="left:1636px;top:569px;width:40px;height:32px;background:#9933ff"></div><div class="c" style="left:1636px;top:569px;width:40px;height:32px;font-size:9.3px;color:#fff"><span>B</span></div><div class="a" style="left:1676px;top:569px;width:40px;height:32px;background:#9933ff"></div><div class="c" style="left:1676px;top:569px;width:40px;height:32px;font-size:9.3px;color:#fff"><span>B</span></div><div class="a" style="left:1716px;top:569px;width:40px;height:32px;background:#990000"></div><div class="c" style="left:1716px;top:569px;width:40px;height:32px;font-size:9.3px;color:#fff"><span>C</span></div><div class="a" style="left:1756px;top:569px;width:40px;height:32px;background:#990000"></div><div class="c" style="left:1756px;top:569px;width:40px;height:32px;font-size:9.3px;color:#fff"><span>C</span></div><div class="a" style="left:1796px;top:569px;width:39px;height:32px;background:#ffff00"></div><div class="c" style="left:1796px;top:569px;width:39px;height:32px;font-size:9.3px;color:#000"><span>O</span></div><div class="a" style="left:1835px;top:569px;width:40px;height:32px;background:#ffff00"></div><div class="c" style="left:1835px;top:569px;width:40px;height:32px;font-size:9.3px;color:#000"><span>O</span></div><div class="a" style="left:1875px;top:569px;width:40px;height:32px;background:#ffff00"></div><div class="c" style="left:1875px;top:569px;width:40px;height:32px;font-size:9.3px;color:#000"><span>O</span></div><div class="a" style="left:1915px;top:569px;width:40px;height:32px;background:#9933ff"></div><div class="c" style="left:1915px;top:569px;width:40px;height:32px;font-size:9.3px;color:#fff"><span>B</span></div><div class="c" style="left:983px;top:569px;width:122px;height:32px;font-size:10.67px"><span>Amy Chen 陈孔燕</span></div><div class="c" style="left:1105px;top:569px;width:97px;height:32px;font-size:10.67px"><span>000027</span></div><div class="c" style="left:1202px;top:569px;width:55px;height:32px;font-size:10.67px"><span>GSM</span></div><div class="c" style="left:1257px;top:569px;width:82px;height:32px;font-size:10.67px"><span>17889722570</span></div><div class="c" style="left:1339px;top:569px;width:100px;height:32px;font-size:11px;font-weight:bold;color:#cc0000;letter-spacing:.3px"><span>GSM</span></div><div class="c" style="left:1439px;top:569px;width:41px;height:32px;font-size:11px;font-weight:bold"><span>62.5</span></div><div class="c" style="left:1480px;top:569px;width:39px;height:32px;font-size:11px;font-weight:bold"><span>2.5</span></div><div class="a" style="left:1519px;top:601px;width:38px;height:32px;background:#9933ff"></div><div class="c" style="left:1519px;top:601px;width:38px;height:32px;font-size:9.3px;color:#fff"><span>B</span></div><div class="a" style="left:1557px;top:601px;width:39px;height:32px;background:#990000"></div><div class="c" style="left:1557px;top:601px;width:39px;height:32px;font-size:9.3px;color:#fff"><span>C</span></div><div class="a" style="left:1596px;top:601px;width:40px;height:32px;background:#990000"></div><div class="c" style="left:1596px;top:601px;width:40px;height:32px;font-size:9.3px;color:#fff"><span>C</span></div><div class="a" style="left:1636px;top:601px;width:40px;height:32px;background:#ffff00"></div><div class="c" style="left:1636px;top:601px;width:40px;height:32px;font-size:9.3px;color:#000"><span>O</span></div><div class="a" style="left:1676px;top:601px;width:40px;height:32px;background:#ffff00"></div><div class="c" style="left:1676px;top:601px;width:40px;height:32px;font-size:9.3px;color:#000"><span>O</span></div><div class="a" style="left:1716px;top:601px;width:40px;height:32px;background:#ffff00"></div><div class="c" style="left:1716px;top:601px;width:40px;height:32px;font-size:9.3px;color:#000"><span>O</span></div><div class="a" style="left:1756px;top:601px;width:40px;height:32px;background:#ff0000"></div><div class="c" style="left:1756px;top:601px;width:40px;height:32px;font-size:9.3px;color:#fff"><span>A</span></div><div class="a" style="left:1796px;top:601px;width:39px;height:32px;background:#9933ff"></div><div class="c" style="left:1796px;top:601px;width:39px;height:32px;font-size:9.3px;color:#fff"><span>B</span></div><div class="a" style="left:1835px;top:601px;width:40px;height:32px;background:#990000"></div><div class="c" style="left:1835px;top:601px;width:40px;height:32px;font-size:9.3px;color:#fff"><span>C</span></div><div class="a" style="left:1875px;top:601px;width:40px;height:32px;background:#990000"></div><div class="c" style="left:1875px;top:601px;width:40px;height:32px;font-size:9.3px;color:#fff"><span>C</span></div><div class="a" style="left:1915px;top:601px;width:40px;height:32px;background:#ffff00"></div><div class="c" style="left:1915px;top:601px;width:40px;height:32px;font-size:9.3px;color:#000"><span>O</span></div><div class="c" style="left:983px;top:601px;width:122px;height:32px;font-size:10.67px"><span>Henry Xie 谢沃明</span></div><div class="c" style="left:1105px;top:601px;width:97px;height:32px;font-size:10.67px"><span>000171</span></div><div class="c" style="left:1202px;top:601px;width:55px;height:32px;font-size:10.67px"><span>GSM</span></div><div class="c" style="left:1257px;top:601px;width:82px;height:32px;font-size:10.67px"><span>15812907630</span></div><div class="c" style="left:1339px;top:601px;width:100px;height:32px;font-size:11px;font-weight:bold;color:#cc0000;letter-spacing:.3px"><span>GSM</span></div><div class="c" style="left:1439px;top:601px;width:41px;height:32px;font-size:11px;font-weight:bold"><span>37.5</span></div><div class="c" style="left:1480px;top:601px;width:39px;height:32px;font-size:11px;font-weight:bold"><span>1</span></div><div class="a" style="left:1519px;top:633px;width:38px;height:32px;background:#990000"></div><div class="c" style="left:1519px;top:633px;width:38px;height:32px;font-size:9.3px;color:#fff"><span>C</span></div><div class="a" style="left:1557px;top:633px;width:39px;height:32px;background:#ffff00"></div><div class="c" style="left:1557px;top:633px;width:39px;height:32px;font-size:9.3px;color:#000"><span>O</span></div><div class="a" style="left:1596px;top:633px;width:40px;height:32px;background:#ffff00"></div><div class="c" style="left:1596px;top:633px;width:40px;height:32px;font-size:9.3px;color:#000"><span>O</span></div><div class="a" style="left:1636px;top:633px;width:40px;height:32px;background:#ff0000"></div><div class="c" style="left:1636px;top:633px;width:40px;height:32px;font-size:9.3px;color:#fff"><span>A</span></div><div class="a" style="left:1676px;top:633px;width:40px;height:32px;background:#ff0000"></div><div class="c" style="left:1676px;top:633px;width:40px;height:32px;font-size:9.3px;color:#fff"><span>A</span></div><div class="a" style="left:1716px;top:633px;width:40px;height:32px;background:#9933ff"></div><div class="c" style="left:1716px;top:633px;width:40px;height:32px;font-size:9.3px;color:#fff"><span>B</span></div><div class="a" style="left:1756px;top:633px;width:40px;height:32px;background:#9933ff"></div><div class="c" style="left:1756px;top:633px;width:40px;height:32px;font-size:9.3px;color:#fff"><span>B</span></div><div class="a" style="left:1796px;top:633px;width:39px;height:32px;background:#990000"></div><div class="c" style="left:1796px;top:633px;width:39px;height:32px;font-size:9.3px;color:#fff"><span>C</span></div><div class="a" style="left:1835px;top:633px;width:40px;height:32px;background:#ffff00"></div><div class="c" style="left:1835px;top:633px;width:40px;height:32px;font-size:9.3px;color:#000"><span>O</span></div><div class="a" style="left:1875px;top:633px;width:40px;height:32px;background:#ffff00"></div><div class="c" style="left:1875px;top:633px;width:40px;height:32px;font-size:9.3px;color:#000"><span>O</span></div><div class="a" style="left:1915px;top:633px;width:40px;height:32px;background:#ffff00"></div><div class="c" style="left:1915px;top:633px;width:40px;height:32px;font-size:9.3px;color:#000"><span>O</span></div><div class="c" style="left:983px;top:633px;width:122px;height:32px;font-size:10.67px"><span>Belinda Wang 王萍</span></div><div class="c" style="left:1105px;top:633px;width:97px;height:32px;font-size:10.67px"><span>000108</span></div><div class="c" style="left:1202px;top:633px;width:55px;height:32px;font-size:10.67px"><span>GSS</span></div><div class="c" style="left:1257px;top:633px;width:82px;height:32px;font-size:10.67px"><span>18212873443</span></div><div class="c" style="left:1339px;top:633px;width:100px;height:32px;font-size:11px;font-weight:bold;color:#cc0000;letter-spacing:.3px"><span>GSS TF GSM</span></div><div class="c" style="left:1439px;top:633px;width:41px;height:32px;font-size:11px;font-weight:bold"><span>17</span></div><div class="c" style="left:1480px;top:633px;width:39px;height:32px;font-size:11px;font-weight:bold"><span>2</span></div><div class="a" style="left:1519px;top:665px;width:38px;height:32px;background:#ff0000"></div><div class="c" style="left:1519px;top:665px;width:38px;height:32px;font-size:9.3px;color:#fff"><span>A</span></div><div class="a" style="left:1557px;top:665px;width:39px;height:32px;background:#9933ff"></div><div class="c" style="left:1557px;top:665px;width:39px;height:32px;font-size:9.3px;color:#fff"><span>B</span></div><div class="a" style="left:1596px;top:665px;width:40px;height:32px;background:#9933ff"></div><div class="c" style="left:1596px;top:665px;width:40px;height:32px;font-size:9.3px;color:#fff"><span>B</span></div><div class="a" style="left:1636px;top:665px;width:40px;height:32px;background:#990000"></div><div class="c" style="left:1636px;top:665px;width:40px;height:32px;font-size:9.3px;color:#fff"><span>C</span></div><div class="a" style="left:1676px;top:665px;width:40px;height:32px;background:#990000"></div><div class="c" style="left:1676px;top:665px;width:40px;height:32px;font-size:9.3px;color:#fff"><span>C</span></div><div class="a" style="left:1716px;top:665px;width:40px;height:32px;background:#ffff00"></div><div class="c" style="left:1716px;top:665px;width:40px;height:32px;font-size:9.3px;color:#000"><span>O</span></div><div class="a" style="left:1756px;top:665px;width:40px;height:32px;background:#ffff00"></div><div class="c" style="left:1756px;top:665px;width:40px;height:32px;font-size:9.3px;color:#000"><span>O</span></div><div class="a" style="left:1796px;top:665px;width:39px;height:32px;background:#ff0000"></div><div class="c" style="left:1796px;top:665px;width:39px;height:32px;font-size:9.3px;color:#fff"><span>A</span></div><div class="a" style="left:1835px;top:665px;width:40px;height:32px;background:#9933ff"></div><div class="c" style="left:1835px;top:665px;width:40px;height:32px;font-size:9.3px;color:#fff"><span>B</span></div><div class="a" style="left:1875px;top:665px;width:40px;height:32px;background:#9933ff"></div><div class="c" style="left:1875px;top:665px;width:40px;height:32px;font-size:9.3px;color:#fff"><span>B</span></div><div class="a" style="left:1915px;top:665px;width:40px;height:32px;background:#990000"></div><div class="c" style="left:1915px;top:665px;width:40px;height:32px;font-size:9.3px;color:#fff"><span>C</span></div><div class="c" style="left:983px;top:665px;width:122px;height:32px;font-size:10.67px"><span>Django Peng 彭琨皓</span></div><div class="c" style="left:1105px;top:665px;width:97px;height:32px;font-size:10.67px"><span>000245</span></div><div class="c" style="left:1202px;top:665px;width:55px;height:32px;font-size:10.67px"><span>GSM</span></div><div class="c" style="left:1257px;top:665px;width:82px;height:32px;font-size:10.67px"><span>17623623040</span></div><div class="c" style="left:1339px;top:665px;width:100px;height:32px;font-size:11px;font-weight:bold;color:#cc0000;letter-spacing:.3px"><span>GSM</span></div><div class="c" style="left:1439px;top:665px;width:41px;height:32px;font-size:11px;font-weight:bold"><span>16</span></div><div class="c" style="left:1480px;top:665px;width:39px;height:32px;font-size:11px;font-weight:bold"><span>3.5</span></div><div class="a" style="left:1519px;top:729px;width:38px;height:32px;background:#ff0000"></div><div class="c" style="left:1519px;top:729px;width:38px;height:32px;font-size:9.3px;color:#fff"><span>A</span></div><div class="a" style="left:1557px;top:729px;width:39px;height:32px;background:#ff0000"></div><div class="c" style="left:1557px;top:729px;width:39px;height:32px;font-size:9.3px;color:#fff"><span>A</span></div><div class="a" style="left:1596px;top:729px;width:40px;height:32px;background:#9933ff"></div><div class="c" style="left:1596px;top:729px;width:40px;height:32px;font-size:9.3px;color:#fff"><span>B</span></div><div class="a" style="left:1636px;top:729px;width:40px;height:32px;background:#9933ff"></div><div class="c" style="left:1636px;top:729px;width:40px;height:32px;font-size:9.3px;color:#fff"><span>B</span></div><div class="a" style="left:1676px;top:729px;width:40px;height:32px;background:#ffff00"></div><div class="c" style="left:1676px;top:729px;width:40px;height:32px;font-size:9.3px;color:#000"><span>O</span></div><div class="a" style="left:1716px;top:729px;width:40px;height:32px;background:#ffff00"></div><div class="c" style="left:1716px;top:729px;width:40px;height:32px;font-size:9.3px;color:#000"><span>O</span></div><div class="a" style="left:1756px;top:729px;width:40px;height:32px;background:#ffff00"></div><div class="c" style="left:1756px;top:729px;width:40px;height:32px;font-size:9.3px;color:#000"><span>O</span></div><div class="a" style="left:1796px;top:729px;width:39px;height:32px;background:#ffff00"></div><div class="c" style="left:1796px;top:729px;width:39px;height:32px;font-size:9.3px;color:#000"><span>O</span></div><div class="a" style="left:1835px;top:729px;width:40px;height:32px;background:#ff0000"></div><div class="c" style="left:1835px;top:729px;width:40px;height:32px;font-size:9.3px;color:#fff"><span>A</span></div><div class="a" style="left:1875px;top:729px;width:40px;height:32px;background:#ff0000"></div><div class="c" style="left:1875px;top:729px;width:40px;height:32px;font-size:9.3px;color:#fff"><span>A</span></div><div class="a" style="left:1915px;top:729px;width:40px;height:32px;background:#ff0000"></div><div class="c" style="left:1915px;top:729px;width:40px;height:32px;font-size:9.3px;color:#fff"><span>A</span></div><div class="c" style="left:983px;top:729px;width:122px;height:32px;font-size:10.67px"><span>Lven Ding 丁相斌</span></div><div class="c" style="left:1105px;top:729px;width:97px;height:32px;font-size:10.67px"><span>000277</span></div><div class="c" style="left:1202px;top:729px;width:55px;height:32px;font-size:10.67px"><span>GSS</span></div><div class="c" style="left:1257px;top:729px;width:82px;height:32px;font-size:10.67px"><span>18501377720</span></div><div class="c" style="left:1339px;top:729px;width:100px;height:32px;font-size:11px;font-weight:bold;color:#cc0000;letter-spacing:.3px"><span>GSS</span></div><div class="c" style="left:1439px;top:729px;width:41px;height:32px;font-size:11px;font-weight:bold"><span>16</span></div><div class="c" style="left:1480px;top:729px;width:39px;height:32px;font-size:11px;font-weight:bold"><span>0</span></div><div class="a" style="left:1519px;top:761px;width:38px;height:32px;background:#ff0000"></div><div class="c" style="left:1519px;top:761px;width:38px;height:32px;font-size:9.3px;color:#fff"><span>A</span></div><div class="a" style="left:1557px;top:761px;width:39px;height:32px;background:#ff0000"></div><div class="c" style="left:1557px;top:761px;width:39px;height:32px;font-size:9.3px;color:#fff"><span>A</span></div><div class="a" style="left:1596px;top:761px;width:40px;height:32px;background:#9933ff"></div><div class="c" style="left:1596px;top:761px;width:40px;height:32px;font-size:9.3px;color:#fff"><span>B</span></div><div class="a" style="left:1636px;top:761px;width:40px;height:32px;background:#9933ff"></div><div class="c" style="left:1636px;top:761px;width:40px;height:32px;font-size:9.3px;color:#fff"><span>B</span></div><div class="a" style="left:1676px;top:761px;width:40px;height:32px;background:#9933ff"></div><div class="c" style="left:1676px;top:761px;width:40px;height:32px;font-size:9.3px;color:#fff"><span>B</span></div><div class="a" style="left:1716px;top:761px;width:40px;height:32px;background:#9933ff"></div><div class="c" style="left:1716px;top:761px;width:40px;height:32px;font-size:9.3px;color:#fff"><span>B</span></div><div class="a" style="left:1756px;top:761px;width:40px;height:32px;background:#ffff00"></div><div class="c" style="left:1756px;top:761px;width:40px;height:32px;font-size:9.3px;color:#000"><span>O</span></div><div class="a" style="left:1796px;top:761px;width:39px;height:32px;background:#ffff00"></div><div class="c" style="left:1796px;top:761px;width:39px;height:32px;font-size:9.3px;color:#000"><span>O</span></div><div class="a" style="left:1835px;top:761px;width:40px;height:32px;background:#ff0000"></div><div class="c" style="left:1835px;top:761px;width:40px;height:32px;font-size:9.3px;color:#fff"><span>A</span></div><div class="a" style="left:1875px;top:761px;width:40px;height:32px;background:#ff0000"></div><div class="c" style="left:1875px;top:761px;width:40px;height:32px;font-size:9.3px;color:#fff"><span>A</span></div><div class="a" style="left:1915px;top:761px;width:40px;height:32px;background:#ff0000"></div><div class="c" style="left:1915px;top:761px;width:40px;height:32px;font-size:9.3px;color:#fff"><span>A</span></div><div class="c" style="left:983px;top:761px;width:122px;height:32px;font-size:10.67px"><span>Rose Peng 彭晓露</span></div><div class="c" style="left:1105px;top:761px;width:97px;height:32px;font-size:10.67px"><span>000310</span></div><div class="c" style="left:1202px;top:761px;width:55px;height:32px;font-size:10.67px"><span>GSA</span></div><div class="c" style="left:1257px;top:761px;width:82px;height:32px;font-size:10.67px"><span>17685187531</span></div><div class="c" style="left:1339px;top:761px;width:100px;height:32px;font-size:11px;font-weight:bold;color:#cc0000;letter-spacing:.3px"><span>GSA</span></div><div class="c" style="left:1439px;top:761px;width:41px;height:32px;font-size:11px;font-weight:bold"><span>0</span></div><div class="c" style="left:1480px;top:761px;width:39px;height:32px;font-size:11px;font-weight:bold"><span>0</span></div><div class="a" style="left:1519px;top:793px;width:38px;height:32px;background:#ffff00"></div><div class="c" style="left:1519px;top:793px;width:38px;height:32px;font-size:9.3px;color:#000"><span>O</span></div><div class="a" style="left:1557px;top:793px;width:39px;height:32px;background:#ffff00"></div><div class="c" style="left:1557px;top:793px;width:39px;height:32px;font-size:9.3px;color:#000"><span>O</span></div><div class="a" style="left:1596px;top:793px;width:40px;height:32px;background:#ff0000"></div><div class="c" style="left:1596px;top:793px;width:40px;height:32px;font-size:9.3px;color:#fff"><span>A</span></div><div class="a" style="left:1636px;top:793px;width:40px;height:32px;background:#ff0000"></div><div class="c" style="left:1636px;top:793px;width:40px;height:32px;font-size:9.3px;color:#fff"><span>A</span></div><div class="a" style="left:1676px;top:793px;width:40px;height:32px;background:#9933ff"></div><div class="c" style="left:1676px;top:793px;width:40px;height:32px;font-size:9.3px;color:#fff"><span>B</span></div><div class="a" style="left:1716px;top:793px;width:40px;height:32px;background:#9933ff"></div><div class="c" style="left:1716px;top:793px;width:40px;height:32px;font-size:9.3px;color:#fff"><span>B</span></div><div class="a" style="left:1756px;top:793px;width:40px;height:32px;background:#9933ff"></div><div class="c" style="left:1756px;top:793px;width:40px;height:32px;font-size:9.3px;color:#fff"><span>B</span></div><div class="a" style="left:1796px;top:793px;width:39px;height:32px;background:#990000"></div><div class="c" style="left:1796px;top:793px;width:39px;height:32px;font-size:9.3px;color:#fff"><span>C</span></div><div class="a" style="left:1835px;top:793px;width:40px;height:32px;background:#ffff00"></div><div class="c" style="left:1835px;top:793px;width:40px;height:32px;font-size:9.3px;color:#000"><span>O</span></div><div class="a" style="left:1875px;top:793px;width:40px;height:32px;background:#ffff00"></div><div class="c" style="left:1875px;top:793px;width:40px;height:32px;font-size:9.3px;color:#000"><span>O</span></div><div class="a" style="left:1915px;top:793px;width:40px;height:32px;background:#9933ff"></div><div class="c" style="left:1915px;top:793px;width:40px;height:32px;font-size:9.3px;color:#fff"><span>B</span></div><div class="c" style="left:983px;top:793px;width:122px;height:32px;font-size:10.67px"><span>Winni Wang 王晶晶</span></div><div class="c" style="left:1105px;top:793px;width:97px;height:32px;font-size:10.67px"><span>000308</span></div><div class="c" style="left:1202px;top:793px;width:55px;height:32px;font-size:10.67px"><span>GSA</span></div><div class="c" style="left:1257px;top:793px;width:82px;height:32px;font-size:10.67px"><span>16684731209</span></div><div class="c" style="left:1339px;top:793px;width:100px;height:32px;font-size:11px;font-weight:bold;color:#cc0000;letter-spacing:.3px"><span>GSA</span></div><div class="c" style="left:1439px;top:793px;width:41px;height:32px;font-size:11px;font-weight:bold"><span>0</span></div><div class="c" style="left:1480px;top:793px;width:39px;height:32px;font-size:11px;font-weight:bold"><span>0</span></div><div class="a" style="left:1519px;top:825px;width:38px;height:32px;background:#ffffff"></div><div class="c" style="left:1519px;top:825px;width:38px;height:32px;font-size:9.3px;color:#000"><span>F</span></div><div class="a" style="left:1557px;top:825px;width:39px;height:32px;background:#990000"></div><div class="c" style="left:1557px;top:825px;width:39px;height:32px;font-size:9.3px;color:#fff"><span>C</span></div><div class="a" style="left:1596px;top:825px;width:40px;height:32px;background:#ffff00"></div><div class="c" style="left:1596px;top:825px;width:40px;height:32px;font-size:9.3px;color:#000"><span>O</span></div><div class="a" style="left:1636px;top:825px;width:40px;height:32px;background:#ffff00"></div><div class="c" style="left:1636px;top:825px;width:40px;height:32px;font-size:9.3px;color:#000"><span>O</span></div><div class="a" style="left:1676px;top:825px;width:40px;height:32px;background:#ff0000"></div><div class="c" style="left:1676px;top:825px;width:40px;height:32px;font-size:9.3px;color:#fff"><span>A</span></div><div class="a" style="left:1716px;top:825px;width:40px;height:32px;background:#ff0000"></div><div class="c" style="left:1716px;top:825px;width:40px;height:32px;font-size:9.3px;color:#fff"><span>A</span></div><div class="a" style="left:1756px;top:825px;width:40px;height:32px;background:#ffffff"></div><div class="c" style="left:1756px;top:825px;width:40px;height:32px;font-size:9.3px;color:#000"><span>F</span></div><div class="a" style="left:1796px;top:825px;width:39px;height:32px;background:#9933ff"></div><div class="c" style="left:1796px;top:825px;width:39px;height:32px;font-size:9.3px;color:#fff"><span>B</span></div><div class="a" style="left:1835px;top:825px;width:40px;height:32px;background:#990000"></div><div class="c" style="left:1835px;top:825px;width:40px;height:32px;font-size:9.3px;color:#fff"><span>C</span></div><div class="a" style="left:1875px;top:825px;width:40px;height:32px;background:#ffff00"></div><div class="c" style="left:1875px;top:825px;width:40px;height:32px;font-size:9.3px;color:#000"><span>O</span></div><div class="a" style="left:1915px;top:825px;width:40px;height:32px;background:#ffff00"></div><div class="c" style="left:1915px;top:825px;width:40px;height:32px;font-size:9.3px;color:#000"><span>O</span></div><div class="c" style="left:983px;top:825px;width:122px;height:32px;font-size:10.67px"><span>Alice Zhu 朱春艳</span></div><div class="c" style="left:1105px;top:825px;width:97px;height:32px;font-size:10.67px"><span>000273</span></div><div class="c" style="left:1202px;top:825px;width:55px;height:32px;font-size:10.67px"><span>GSA</span></div><div class="c" style="left:1257px;top:825px;width:82px;height:32px;font-size:10.67px"><span>19110882240</span></div><div class="c" style="left:1339px;top:825px;width:100px;height:32px;font-size:11px;font-weight:bold;color:#cc0000;letter-spacing:.3px"><span>GSA</span></div><div class="c" style="left:1439px;top:825px;width:41px;height:32px;font-size:11px;font-weight:bold"><span>16</span></div><div class="c" style="left:1480px;top:825px;width:39px;height:32px;font-size:11px;font-weight:bold"><span>0</span></div><div class="a" style="left:1519px;top:857px;width:38px;height:32px;background:#9933ff"></div><div class="c" style="left:1519px;top:857px;width:38px;height:32px;font-size:9.3px;color:#fff"><span>B</span></div><div class="a" style="left:1557px;top:857px;width:39px;height:32px;background:#9933ff"></div><div class="c" style="left:1557px;top:857px;width:39px;height:32px;font-size:9.3px;color:#fff"><span>B</span></div><div class="a" style="left:1596px;top:857px;width:40px;height:32px;background:#990000"></div><div class="c" style="left:1596px;top:857px;width:40px;height:32px;font-size:9.3px;color:#fff"><span>C</span></div><div class="a" style="left:1636px;top:857px;width:40px;height:32px;background:#ff33cc"></div><div class="c" style="left:1636px;top:857px;width:40px;height:32px;font-size:9.3px;color:#000"><span>AL</span></div><div class="a" style="left:1676px;top:857px;width:40px;height:32px;background:#ff33cc"></div><div class="c" style="left:1676px;top:857px;width:40px;height:32px;font-size:9.3px;color:#000"><span>AL</span></div><div class="a" style="left:1716px;top:857px;width:40px;height:32px;background:#ff0000"></div><div class="c" style="left:1716px;top:857px;width:40px;height:32px;font-size:9.3px;color:#fff"><span>A</span></div><div class="a" style="left:1756px;top:857px;width:40px;height:32px;background:#ff0000"></div><div class="c" style="left:1756px;top:857px;width:40px;height:32px;font-size:9.3px;color:#fff"><span>A</span></div><div class="a" style="left:1796px;top:857px;width:39px;height:32px;background:#ff0000"></div><div class="c" style="left:1796px;top:857px;width:39px;height:32px;font-size:9.3px;color:#fff"><span>A</span></div><div class="a" style="left:1835px;top:857px;width:40px;height:32px;background:#9933ff"></div><div class="c" style="left:1835px;top:857px;width:40px;height:32px;font-size:9.3px;color:#fff"><span>B</span></div><div class="a" style="left:1875px;top:857px;width:40px;height:32px;background:#9933ff"></div><div class="c" style="left:1875px;top:857px;width:40px;height:32px;font-size:9.3px;color:#fff"><span>B</span></div><div class="a" style="left:1915px;top:857px;width:40px;height:32px;background:#9933ff"></div><div class="c" style="left:1915px;top:857px;width:40px;height:32px;font-size:9.3px;color:#fff"><span>B</span></div><div class="c" style="left:983px;top:857px;width:122px;height:32px;font-size:10.67px"><span>Ethan Zhao 赵梓淇</span></div><div class="c" style="left:1105px;top:857px;width:97px;height:32px;font-size:10.67px"><span>000036</span></div><div class="c" style="left:1202px;top:857px;width:55px;height:32px;font-size:10.67px"><span>CON</span></div><div class="c" style="left:1257px;top:857px;width:82px;height:32px;font-size:10.67px"><span>15521010536</span></div><div class="c" style="left:1339px;top:857px;width:100px;height:32px;font-size:11px;font-weight:bold;color:#cc0000;letter-spacing:.3px"><span>CON</span></div><div class="c" style="left:1439px;top:857px;width:41px;height:32px;font-size:11px;font-weight:bold"><span>10</span></div><div class="c" style="left:1480px;top:857px;width:39px;height:32px;font-size:11px;font-weight:bold"><span>2</span></div><div class="a" style="left:1519px;top:889px;width:38px;height:32px;background:#ffff00"></div><div class="c" style="left:1519px;top:889px;width:38px;height:32px;font-size:9.3px;color:#000"><span>O</span></div><div class="a" style="left:1557px;top:889px;width:39px;height:32px;background:#ffffff"></div><div class="c" style="left:1557px;top:889px;width:39px;height:32px;font-size:9.3px;color:#000"><span>F</span></div><div class="a" style="left:1596px;top:889px;width:40px;height:32px;background:#ffffff"></div><div class="c" style="left:1596px;top:889px;width:40px;height:32px;font-size:9.3px;color:#000"><span>F</span></div><div class="a" style="left:1636px;top:889px;width:40px;height:32px;background:#990000"></div><div class="c" style="left:1636px;top:889px;width:40px;height:32px;font-size:9.3px;color:#fff"><span>C</span></div><div class="a" style="left:1676px;top:889px;width:40px;height:32px;background:#990000"></div><div class="c" style="left:1676px;top:889px;width:40px;height:32px;font-size:9.3px;color:#fff"><span>C</span></div><div class="a" style="left:1716px;top:889px;width:40px;height:32px;background:#ffff00"></div><div class="c" style="left:1716px;top:889px;width:40px;height:32px;font-size:9.3px;color:#000"><span>O</span></div><div class="a" style="left:1756px;top:889px;width:40px;height:32px;background:#ffff00"></div><div class="c" style="left:1756px;top:889px;width:40px;height:32px;font-size:9.3px;color:#000"><span>O</span></div><div class="a" style="left:1796px;top:889px;width:39px;height:32px;background:#ffffff"></div><div class="c" style="left:1796px;top:889px;width:39px;height:32px;font-size:9.3px;color:#000"><span>F</span></div><div class="a" style="left:1835px;top:889px;width:40px;height:32px;background:#9933ff"></div><div class="c" style="left:1835px;top:889px;width:40px;height:32px;font-size:9.3px;color:#fff"><span>B</span></div><div class="a" style="left:1875px;top:889px;width:40px;height:32px;background:#9933ff"></div><div class="c" style="left:1875px;top:889px;width:40px;height:32px;font-size:9.3px;color:#fff"><span>B</span></div><div class="a" style="left:1915px;top:889px;width:40px;height:32px;background:#ffff00"></div><div class="c" style="left:1915px;top:889px;width:40px;height:32px;font-size:9.3px;color:#000"><span>O</span></div><div class="c" style="left:983px;top:889px;width:122px;height:32px;font-size:10.67px"><span>Kimi Yuan 袁宇嵘鸣</span></div><div class="c" style="left:1105px;top:889px;width:97px;height:32px;font-size:10.67px"><span>000285</span></div><div class="c" style="left:1202px;top:889px;width:55px;height:32px;font-size:10.67px"><span>Trainee</span></div><div class="c" style="left:1257px;top:889px;width:82px;height:32px;font-size:10.67px"><span>15180859212</span></div><div class="c" style="left:1339px;top:889px;width:100px;height:32px;font-size:11px;font-weight:bold;color:#cc0000;letter-spacing:.3px"><span>Trainee</span></div><div class="c" style="left:1439px;top:889px;width:41px;height:32px;font-size:11px;font-weight:bold"><span>0</span></div><div class="c" style="left:1480px;top:889px;width:39px;height:32px;font-size:11px;font-weight:bold"><span>0</span></div><div class="a" style="left:1519px;top:921px;width:38px;height:32px;background:#990000"></div><div class="c" style="left:1519px;top:921px;width:38px;height:32px;font-size:9.3px;color:#fff"><span>C</span></div><div class="a" style="left:1557px;top:921px;width:39px;height:32px;background:#ffff00"></div><div class="c" style="left:1557px;top:921px;width:39px;height:32px;font-size:9.3px;color:#000"><span>O</span></div><div class="a" style="left:1596px;top:921px;width:40px;height:32px;background:#ffff00"></div><div class="c" style="left:1596px;top:921px;width:40px;height:32px;font-size:9.3px;color:#000"><span>O</span></div><div class="a" style="left:1636px;top:921px;width:40px;height:32px;background:#ffffff"></div><div class="c" style="left:1636px;top:921px;width:40px;height:32px;font-size:9.3px;color:#000"><span>F</span></div><div class="a" style="left:1676px;top:921px;width:40px;height:32px;background:#ffffff"></div><div class="c" style="left:1676px;top:921px;width:40px;height:32px;font-size:9.3px;color:#000"><span>F</span></div><div class="a" style="left:1716px;top:921px;width:40px;height:32px;background:#990000"></div><div class="c" style="left:1716px;top:921px;width:40px;height:32px;font-size:9.3px;color:#fff"><span>C</span></div><div class="a" style="left:1756px;top:921px;width:40px;height:32px;background:#990000"></div><div class="c" style="left:1756px;top:921px;width:40px;height:32px;font-size:9.3px;color:#fff"><span>C</span></div><div class="a" style="left:1796px;top:921px;width:39px;height:32px;background:#ffff00"></div><div class="c" style="left:1796px;top:921px;width:39px;height:32px;font-size:9.3px;color:#000"><span>O</span></div><div class="a" style="left:1835px;top:921px;width:40px;height:32px;background:#ffff00"></div><div class="c" style="left:1835px;top:921px;width:40px;height:32px;font-size:9.3px;color:#000"><span>O</span></div><div class="a" style="left:1875px;top:921px;width:40px;height:32px;background:#990000"></div><div class="c" style="left:1875px;top:921px;width:40px;height:32px;font-size:9.3px;color:#fff"><span>C</span></div><div class="a" style="left:1915px;top:921px;width:40px;height:32px;background:#990000"></div><div class="c" style="left:1915px;top:921px;width:40px;height:32px;font-size:9.3px;color:#fff"><span>C</span></div><div class="c" style="left:983px;top:921px;width:122px;height:32px;font-size:10.67px"><span>Lena Tan 谭玲丽</span></div><div class="c" style="left:1105px;top:921px;width:97px;height:32px;font-size:10.67px"><span>000279</span></div><div class="c" style="left:1202px;top:921px;width:55px;height:32px;font-size:10.67px"><span>Trainee</span></div><div class="c" style="left:1257px;top:921px;width:82px;height:32px;font-size:10.67px"><span>19117661732</span></div><div class="c" style="left:1339px;top:921px;width:100px;height:32px;font-size:11px;font-weight:bold;color:#cc0000;letter-spacing:.3px"><span>Trainee</span></div><div class="c" style="left:1439px;top:921px;width:41px;height:32px;font-size:11px;font-weight:bold"><span>0</span></div><div class="c" style="left:1480px;top:921px;width:39px;height:32px;font-size:11px;font-weight:bold"><span>0</span></div><svg style="left:1551px;top:506px;" width="6" height="6" viewBox="0 0 6 6"><path d="M0 0 H6 V6 Z" fill="#ff0000"/></svg><svg style="left:1590px;top:506px;" width="6" height="6" viewBox="0 0 6 6"><path d="M0 0 H6 V6 Z" fill="#ff0000"/></svg><svg style="left:1551px;top:570px;" width="6" height="6" viewBox="0 0 6 6"><path d="M0 0 H6 V6 Z" fill="#ff0000"/></svg><svg style="left:1551px;top:890px;" width="6" height="6" viewBox="0 0 6 6"><path d="M0 0 H6 V6 Z" fill="#ff0000"/></svg><div class="t" style="left:1833px;top:546px;font-size:10.67px;font-weight:bold;color:#0070c0">GSM (KWEAP)</div><div class="t" style="left:1811px;top:706px;font-size:10.67px;font-weight:bold;color:#0070c0">Front Desk (KWEAP)</div><div class="a" style="left:983px;top:984px;width:937px;height:20px;background:#a9d08e"></div><div class="t" style="left:986px;top:987px;font-size:10.6px;font-weight:bold;color:#e00000">Shift Remark （KWEAP):</div><div class="a" style="left:983px;top:471px;width:937px;height:1px;background:#000"></div><div class="a" style="left:983px;top:505px;width:356px;height:1px;background:#9b9b9b"></div><div class="a" style="left:1339px;top:505px;width:581px;height:1px;background:#000"></div><div class="a" style="left:983px;top:537px;width:937px;height:1px;background:#000"></div><div class="a" style="left:983px;top:569px;width:937px;height:1px;background:#000"></div><div class="a" style="left:983px;top:601px;width:937px;height:1px;background:#000"></div><div class="a" style="left:983px;top:633px;width:937px;height:1px;background:#000"></div><div class="a" style="left:983px;top:665px;width:937px;height:1px;background:#000"></div><div class="a" style="left:983px;top:697px;width:937px;height:1px;background:#000"></div><div class="a" style="left:983px;top:729px;width:937px;height:1px;background:#000"></div><div class="a" style="left:983px;top:761px;width:937px;height:1px;background:#000"></div><div class="a" style="left:983px;top:793px;width:937px;height:1px;background:#000"></div><div class="a" style="left:983px;top:825px;width:937px;height:1px;background:#000"></div><div class="a" style="left:983px;top:857px;width:937px;height:1px;background:#000"></div><div class="a" style="left:983px;top:889px;width:937px;height:1px;background:#000"></div><div class="a" style="left:983px;top:921px;width:937px;height:1px;background:#000"></div><div class="a" style="left:983px;top:953px;width:937px;height:1px;background:#000"></div><div class="a" style="left:1519px;top:433px;width:401px;height:1px;background:#000"></div><div class="a" style="left:983px;top:983px;width:937px;height:1px;background:#000"></div><div class="a" style="left:983px;top:1004px;width:937px;height:1px;background:#c6c6c6"></div><div class="a" style="left:1105px;top:399px;width:1px;height:72px;background:#000"></div><div class="a" style="left:1202px;top:399px;width:1px;height:72px;background:#000"></div><div class="a" style="left:1257px;top:399px;width:1px;height:72px;background:#000"></div><div class="a" style="left:1339px;top:399px;width:1px;height:72px;background:#000"></div><div class="a" style="left:1439px;top:399px;width:1px;height:106px;background:#000"></div><div class="a" style="left:1480px;top:399px;width:1px;height:106px;background:#000"></div><div class="a" style="left:1557px;top:399px;width:1px;height:106px;background:#000"></div><div class="a" style="left:1596px;top:399px;width:1px;height:106px;background:#000"></div><div class="a" style="left:1636px;top:399px;width:1px;height:106px;background:#000"></div><div class="a" style="left:1676px;top:399px;width:1px;height:106px;background:#000"></div><div class="a" style="left:1716px;top:399px;width:1px;height:106px;background:#000"></div><div class="a" style="left:1756px;top:399px;width:1px;height:106px;background:#000"></div><div class="a" style="left:1796px;top:399px;width:1px;height:106px;background:#000"></div><div class="a" style="left:1835px;top:399px;width:1px;height:106px;background:#000"></div><div class="a" style="left:1875px;top:399px;width:1px;height:106px;background:#000"></div><div class="a" style="left:1915px;top:399px;width:1px;height:106px;background:#000"></div><div class="a" style="left:1339px;top:471px;width:1px;height:34px;background:#000"></div><div class="a" style="left:1105px;top:505px;width:1px;height:32px;background:#000"></div><div class="a" style="left:1202px;top:505px;width:1px;height:32px;background:#000"></div><div class="a" style="left:1257px;top:505px;width:1px;height:32px;background:#000"></div><div class="a" style="left:1339px;top:505px;width:1px;height:32px;background:#000"></div><div class="a" style="left:1439px;top:505px;width:1px;height:32px;background:#000"></div><div class="a" style="left:1480px;top:505px;width:1px;height:32px;background:#000"></div><div class="a" style="left:1557px;top:505px;width:1px;height:32px;background:#000"></div><div class="a" style="left:1596px;top:505px;width:1px;height:32px;background:#000"></div><div class="a" style="left:1636px;top:505px;width:1px;height:32px;background:#000"></div><div class="a" style="left:1676px;top:505px;width:1px;height:32px;background:#000"></div><div class="a" style="left:1716px;top:505px;width:1px;height:32px;background:#000"></div><div class="a" style="left:1756px;top:505px;width:1px;height:32px;background:#000"></div><div class="a" style="left:1796px;top:505px;width:1px;height:32px;background:#000"></div><div class="a" style="left:1835px;top:505px;width:1px;height:32px;background:#000"></div><div class="a" style="left:1875px;top:505px;width:1px;height:32px;background:#000"></div><div class="a" style="left:1915px;top:505px;width:1px;height:32px;background:#000"></div><div class="a" style="left:1105px;top:569px;width:1px;height:128px;background:#000"></div><div class="a" style="left:1202px;top:569px;width:1px;height:128px;background:#000"></div><div class="a" style="left:1257px;top:569px;width:1px;height:128px;background:#000"></div><div class="a" style="left:1339px;top:569px;width:1px;height:128px;background:#000"></div><div class="a" style="left:1439px;top:569px;width:1px;height:128px;background:#000"></div><div class="a" style="left:1480px;top:569px;width:1px;height:128px;background:#000"></div><div class="a" style="left:1557px;top:569px;width:1px;height:128px;background:#000"></div><div class="a" style="left:1596px;top:569px;width:1px;height:128px;background:#000"></div><div class="a" style="left:1636px;top:569px;width:1px;height:128px;background:#000"></div><div class="a" style="left:1676px;top:569px;width:1px;height:128px;background:#000"></div><div class="a" style="left:1716px;top:569px;width:1px;height:128px;background:#000"></div><div class="a" style="left:1756px;top:569px;width:1px;height:128px;background:#000"></div><div class="a" style="left:1796px;top:569px;width:1px;height:128px;background:#000"></div><div class="a" style="left:1835px;top:569px;width:1px;height:128px;background:#000"></div><div class="a" style="left:1875px;top:569px;width:1px;height:128px;background:#000"></div><div class="a" style="left:1915px;top:569px;width:1px;height:128px;background:#000"></div><div class="a" style="left:1105px;top:729px;width:1px;height:224px;background:#000"></div><div class="a" style="left:1202px;top:729px;width:1px;height:224px;background:#000"></div><div class="a" style="left:1257px;top:729px;width:1px;height:224px;background:#000"></div><div class="a" style="left:1339px;top:729px;width:1px;height:224px;background:#000"></div><div class="a" style="left:1439px;top:729px;width:1px;height:224px;background:#000"></div><div class="a" style="left:1480px;top:729px;width:1px;height:224px;background:#000"></div><div class="a" style="left:1557px;top:729px;width:1px;height:224px;background:#000"></div><div class="a" style="left:1596px;top:729px;width:1px;height:224px;background:#000"></div><div class="a" style="left:1636px;top:729px;width:1px;height:224px;background:#000"></div><div class="a" style="left:1676px;top:729px;width:1px;height:224px;background:#000"></div><div class="a" style="left:1716px;top:729px;width:1px;height:224px;background:#000"></div><div class="a" style="left:1756px;top:729px;width:1px;height:224px;background:#000"></div><div class="a" style="left:1796px;top:729px;width:1px;height:224px;background:#000"></div><div class="a" style="left:1835px;top:729px;width:1px;height:224px;background:#000"></div><div class="a" style="left:1875px;top:729px;width:1px;height:224px;background:#000"></div><div class="a" style="left:1915px;top:729px;width:1px;height:224px;background:#000"></div><div class="a" style="left:1519px;top:270px;width:1px;height:734px;background:#a6a6a6"></div><div class="a" style="left:961px;top:1004px;width:959px;height:28px;background:#e6e6e6;border-top:1px solid #c6c6c6"></div><svg style="left:988px;top:1013px;" width="6" height="9" viewBox="0 0 6 9"><path d="M5 0 L0 4.5 L5 9 Z" fill="#c4c4c4"/></svg><svg style="left:1016px;top:1013px;" width="6" height="9" viewBox="0 0 6 9"><path d="M0 0 L5 4.5 L0 9 Z" fill="#c4c4c4"/></svg><div class="a" style="left:1061px;top:1004px;width:46px;height:25px;background:#fff;border-left:1px solid #c6c6c6;border-right:1px solid #c6c6c6"></div><div class="a" style="left:1061px;top:1027px;width:46px;height:2px;background:#217346"></div><div class="c" style="left:1061px;top:1006px;width:46px;height:20px;font-size:13px;color:#217346"><span>1月</span></div><div class="c" style="left:1108px;top:1006px;width:42px;height:20px;font-size:13px;color:#333"><span>2月</span></div><div class="a" style="left:1150px;top:1008px;width:1px;height:19px;background:#9b9b9b"></div><svg style="left:1183px;top:1009px;" width="17" height="17" viewBox="0 0 17 17"><circle cx="8.5" cy="8.5" r="7.5" fill="none" stroke="#666" stroke-width="1.3"/><path d="M8.5 4.5 V12.5 M4.5 8.5 H12.5" stroke="#666" stroke-width="1.6"/></svg><div class="a" style="left:1549px;top:1013px;width:2px;height:2px;background:#9a9a9a"></div><div class="a" style="left:1549px;top:1018px;width:2px;height:2px;background:#9a9a9a"></div><div class="a" style="left:1549px;top:1023px;width:2px;height:2px;background:#9a9a9a"></div><div class="a" style="left:1566px;top:1011px;width:346px;height:15px;background:#dcdcdc"></div><div class="a" style="left:1566px;top:1011px;width:15px;height:15px;background:#fff;border:1px solid #c6c6c6"></div><svg style="left:1571px;top:1015px;" width="5" height="8" viewBox="0 0 5 8"><path d="M5 0 V8 L0 4 Z" fill="#555"/></svg><div class="a" style="left:1581px;top:1011px;width:76px;height:15px;background:#fff;border:1px solid #c6c6c6"></div><div class="a" style="left:1906px;top:1011px;width:14px;height:15px;background:#fff;border:1px solid #c6c6c6"></div><svg style="left:1911px;top:1015px;" width="5" height="8" viewBox="0 0 5 8"><path d="M0 0 V8 L5 4 Z" fill="#555"/></svg><div class="a" style="left:0px;top:1032px;width:1920px;height:48px;background:#c8eadb;border-top:1px solid #b6d4c6"></div><svg style="left:18px;top:1045px;" width="27" height="18" viewBox="0 0 27 18"><defs><linearGradient id="cl" x1="0" y1="0" x2="0" y2="1"><stop offset="0" stop-color="#e6f0ff"/><stop offset="1" stop-color="#8fb3e6"/></linearGradient></defs><path d="M5 17 A5 5 0 0 1 4 7 A7 7 0 0 1 17 4 A5.5 5.5 0 0 1 25 10 A4 4 0 0 1 22 17 Z" fill="url(#cl)" stroke="#9cb8e0" stroke-width=".6"/></svg><div class="t" style="left:50px;top:1041px;font-size:12px;color:#1a1a1a">12°C</div><div class="t" style="left:50px;top:1056px;font-size:12px;color:#1a1a1a">阴</div><svg style="left:661px;top:1045px;" width="23" height="23" viewBox="0 0 23 23"><defs><linearGradient id="wb" x1="0" y1="0" x2="1" y2="1"><stop offset="0" stop-color="#3fc6f7"/><stop offset="1" stop-color="#0a68d8"/></linearGradient></defs><rect x="0" y="0" width="11" height="11" fill="url(#wb)"/><rect x="12" y="0" width="11" height="11" fill="url(#wb)"/><rect x="0" y="12" width="11" height="11" fill="url(#wb)"/><rect x="12" y="12" width="11" height="11" fill="url(#wb)"/></svg><div class="a" style="left:698px;top:1040px;width:219px;height:32px;background:#eef8f3;border:1px solid #d5e8de;border-radius:16px"></div><svg style="left:708px;top:1048px;" width="16" height="17" viewBox="0 0 16 17"><circle cx="6.5" cy="6.5" r="5.3" fill="none" stroke="#222" stroke-width="1.8"/><path d="M10.5 10.5 L15 15" stroke="#222" stroke-width="2"/></svg><div class="t" style="left:734px;top:1048px;font-size:13px;color:#333">搜索</div><svg style="left:864px;top:1044px;" width="50" height="26" viewBox="0 0 50 26"><defs><linearGradient id="bn" x1="0" y1="0" x2="1" y2="1"><stop offset="0" stop-color="#f6cf92"/><stop offset="1" stop-color="#d9a35a"/></linearGradient><linearGradient id="th" x1="0" y1="0" x2="1" y2="0"><stop offset="0" stop-color="#6f5fb0"/><stop offset=".4" stop-color="#8b7cc8"/><stop offset="1" stop-color="#3f3377"/></linearGradient></defs><path d="M2 10 Q4 2 12 2 Q19 0 21 5 Q22 11 16 16 Q10 21 5 19 Q1 16 2 10 Z" fill="url(#bn)"/><path d="M4 6 Q10 11 11 4" fill="none" stroke="#e8607a" stroke-width="2.2"/><path d="M3 10 Q4 14 7 13" fill="none" stroke="#e8607a" stroke-width="2.5"/><path d="M13 12 Q15 20 20 21 M16 21 L22 24" fill="none" stroke="#e05a78" stroke-width="1.3"/><rect x="29" y="2" width="13" height="12" rx="1.5" fill="url(#th)"/><path d="M25 15 Q27 11 29 13 L42 13 Q46 12 49 14 Q46 18 41 18 L30 18 Q26 18 25 15 Z" fill="#5a4a9a"/><rect x="29" y="11" width="13" height="4" fill="#c2b3ee"/></svg><svg style="left:929px;top:1045px;" width="24" height="23" viewBox="0 0 24 23"><rect x="6" y="0" width="18" height="16" rx="1.5" fill="#f6f6f6" stroke="#e2e2e2" stroke-width=".6"/><rect x="0" y="6" width="18" height="16" rx="1.5" fill="#262626"/><rect x="6" y="6" width="12" height="10" rx="1" fill="#c4c4c4"/></svg><svg style="left:973px;top:1045px;" width="24" height="22" viewBox="0 0 24 22"><path d="M0 2 Q0 0 2 0 H8 L10 2 H22 Q24 2 24 4 V20 Q24 22 22 22 H2 Q0 22 0 20 Z" fill="#f6c342"/><rect x="0" y="5" width="24" height="17" rx="1" fill="#ffd866"/><rect x="5" y="14" width="14" height="6" rx="1" fill="#1877d6"/></svg><svg style="left:1017px;top:1044px;" width="25" height="25" viewBox="0 0 25 25"><defs><linearGradient id="eg" x1="0" y1="0" x2="1" y2="1"><stop offset="0" stop-color="#35c1f1"/><stop offset=".6" stop-color="#1b8fd6"/><stop offset="1" stop-color="#0c59a4"/></linearGradient><linearGradient id="eg2" x1="0" y1="0" x2="1" y2="0"><stop offset="0" stop-color="#2fb8ef"/><stop offset="1" stop-color="#6fd66c"/></linearGradient></defs><circle cx="12.5" cy="12.5" r="12" fill="url(#eg)"/><path d="M4 12 Q6 3 14 3 Q23 4 24 13 Q22 8 15 9 Q9 10 11 16 Q13 21 22 19 Q17 25 10 23 Q3 20 4 12 Z" fill="url(#eg2)"/><ellipse cx="16" cy="14" rx="5" ry="3.3" fill="#c8eadb"/></svg><svg style="left:1061px;top:1044px;" width="24" height="25" viewBox="0 0 24 25"><path d="M7 5 V2 Q7 0 9 0 H15 Q17 0 17 2 V5" fill="none" stroke="#36a3f7" stroke-width="1.8"/><rect x="0" y="5" width="24" height="20" rx="3" fill="#1e4f9c"/><rect x="7" y="9" width="4.5" height="4.5" fill="#f35325"/><rect x="12.5" y="9" width="4.5" height="4.5" fill="#81bc06"/><rect x="7" y="14.5" width="4.5" height="4.5" fill="#05a6f0"/><rect x="12.5" y="14.5" width="4.5" height="4.5" fill="#ffba08"/></svg><svg style="left:1107px;top:1044px;" width="19" height="24" viewBox="0 0 19 24"><rect x="0" y="0" width="19" height="24" rx="2" fill="#6a7480"/><rect x="2" y="2" width="15" height="4" fill="#5fd2f7"/><g fill="#d9dde2"><rect x="2" y="8" width="4" height="3.5"/><rect x="7.5" y="8" width="4" height="3.5"/><rect x="2" y="13" width="4" height="3.5"/><rect x="7.5" y="13" width="4" height="3.5"/><rect x="2" y="18" width="4" height="3.5"/><rect x="7.5" y="18" width="4" height="3.5"/><rect x="13" y="8" width="4" height="3.5"/></g><rect x="13" y="13" width="4" height="9" fill="#1e3f82"/></svg><svg style="left:1148px;top:1046px;" width="25" height="21" viewBox="0 0 25 21"><ellipse cx="9" cy="8" rx="9" ry="7.5" fill="#2dc100"/><path d="M3 13 L2 17 L7 14 Z" fill="#2dc100"/><ellipse cx="17.5" cy="14" rx="7.5" ry="6" fill="#f0f0f0"/><circle cx="15" cy="13" r=".9" fill="#999"/><circle cx="20" cy="13" r=".9" fill="#999"/><circle cx="6" cy="6" r="1" fill="#fff"/><circle cx="12" cy="6" r="1" fill="#fff"/></svg><svg style="left:1192px;top:1044px;" width="25" height="25" viewBox="0 0 25 25"><circle cx="12.5" cy="12.5" r="12" fill="#db4437"/><path d="M12.5 12.5 L2.1 18.5 A12 12 0 0 0 16.6 23.8 Z" fill="#0f9d58"/><path d="M12.5 12.5 L16.6 23.8 A12 12 0 0 0 22.9 6.5 H12.5 Z" fill="#ffcd40"/><circle cx="12.5" cy="12.5" r="5.6" fill="#fff"/><circle cx="12.5" cy="12.5" r="4.4" fill="#4285f4"/></svg><div class="a" style="left:1230px;top:1037px;width:37px;height:38px;background:#e3f4ec;border-radius:4px;border:1px solid #d6ebe0"></div><svg style="left:1237px;top:1044px;" width="24" height="24" viewBox="0 0 24 24"><rect x="8" y="2" width="15" height="20" fill="#fff" stroke="#1d6f42" stroke-width="1"/><path d="M12 6 H22 M12 10 H22 M12 14 H22 M12 18 H22 M16 3 V21" stroke="#1d6f42" stroke-width=".8"/><path d="M0 3 L14 0 V24 L0 21 Z" fill="#1d6f42"/><text x="2.5" y="16" font-size="10" font-weight="bold" fill="#fff" font-family="Liberation Sans">X</text></svg><div class="a" style="left:1241px;top:1072px;width:15px;height:3px;background:#0a68d8;border-radius:2px"></div><div class="a" style="left:981px;top:1073px;width:8px;height:3px;background:#7d8a85;border-radius:2px"></div><div class="a" style="left:1025px;top:1073px;width:8px;height:3px;background:#7d8a85;border-radius:2px"></div><div class="a" style="left:1113px;top:1073px;width:8px;height:3px;background:#7d8a85;border-radius:2px"></div><div class="a" style="left:1157px;top:1073px;width:8px;height:3px;background:#7d8a85;border-radius:2px"></div><div class="a" style="left:1201px;top:1073px;width:8px;height:3px;background:#7d8a85;border-radius:2px"></div><svg style="left:1645px;top:1050px;" width="12" height="8" viewBox="0 0 12 8"><path d="M1 7 L6 2 L11 7" fill="none" stroke="#222" stroke-width="1.4"/></svg><svg style="left:1674px;top:1046px;" width="19" height="19" viewBox="0 0 19 19"><path d="M3 9 A6.5 6.5 0 0 1 15 5 M16 10 A6.5 6.5 0 0 1 4 14" fill="none" stroke="#222" stroke-width="1.5"/><path d="M15 1 V5 H11" fill="none" stroke="#222" stroke-width="1.5"/><path d="M1 15 L4 14 V18" fill="none" stroke="#222" stroke-width="1.5"/><circle cx="13.5" cy="14.5" r="3.5" fill="#1a73e8"/></svg><div class="t" style="left:1707px;top:1047px;font-size:15px;color:#222">中</div><div class="t" style="left:1745px;top:1047px;font-size:15px;color:#222">拼</div><svg style="left:1782px;top:1046px;" width="17" height="17" viewBox="0 0 17 17"><rect x="0.7" y="3.7" width="12" height="9" fill="none" stroke="#222" stroke-width="1.3"/><path d="M4 16 H10 M7 13 V16" stroke="#222" stroke-width="1.3"/><rect x="12" y="0.7" width="4" height="7" rx="2" fill="#fff" stroke="#222" stroke-width="1.1"/></svg><svg style="left:1807px;top:1048px;" width="16" height="14" viewBox="0 0 16 14"><path d="M1 5 H4 L8 1.5 V12.5 L4 9 H1 Z" fill="none" stroke="#222" stroke-width="1.2"/><path d="M10.5 4.5 Q12 7 10.5 9.5 M12.5 3 Q15 7 12.5 11" fill="none" stroke="#222" stroke-width="1.2"/></svg><div class="t" style="left:1873px;top:1042px;font-size:12px;color:#1a1a1a">15:22</div><div class="t" style="left:1840px;top:1058px;font-size:12px;color:#1a1a1a">2025/12/16</div></body></html>
